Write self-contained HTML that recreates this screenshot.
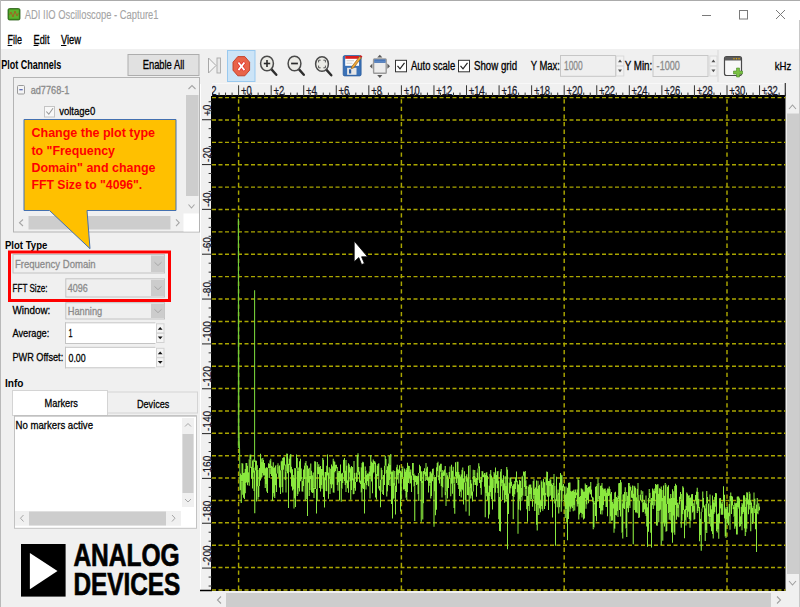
<!DOCTYPE html>
<html><head><meta charset="utf-8"><style>
html,body{margin:0;padding:0;width:800px;height:607px;overflow:hidden;background:#f0f0f0}
svg{display:block;font-family:"Liberation Sans",sans-serif}
</style></head><body>
<svg width="800" height="607" viewBox="0 0 800 607">
<rect x="0" y="0" width="800" height="607" fill="#f0f0f0" />
<rect x="0" y="0" width="800" height="49" fill="#ffffff" />
<line x1="0" y1="0.5" x2="800" y2="0.5" stroke="#ababab" stroke-width="1" />
<line x1="0.5" y1="0" x2="0.5" y2="607" stroke="#b9b9b9" stroke-width="1" />
<rect x="8" y="8.5" width="12" height="11.5" rx="1.5" fill="#3f8f1f" stroke="#2a5e14" stroke-width="0.8"/>
<rect x="9.2" y="9.7" width="9.6" height="9" fill="#5cb32e"/>
<polyline points="9.5,15 11,12 13,17 15,11 17,16 18.5,13" fill="none" stroke="#b05020" stroke-width="0.8"/>
<text x="24.8" y="19.1" font-size="12" fill="#a4a4a4" textLength="133.7" lengthAdjust="spacingAndGlyphs" stroke="#a4a4a4" stroke-width="0.1" >ADI IIO Oscilloscope - Capture1</text>
<line x1="702" y1="15.5" x2="711" y2="15.5" stroke="#7a7a7a" stroke-width="1" />
<rect x="739.5" y="10.5" width="8" height="8.5" fill="none" stroke="#7a7a7a" stroke-width="1" />
<line x1="776" y1="10" x2="785" y2="19" stroke="#7a7a7a" stroke-width="1" />
<line x1="785" y1="10" x2="776" y2="19" stroke="#7a7a7a" stroke-width="1" />
<text x="7.6" y="44" font-size="12.2" fill="#000" textLength="14.4" lengthAdjust="spacingAndGlyphs" stroke="#000" stroke-width="0.3" >File</text>
<line x1="7.6" y1="45.5" x2="12.2" y2="45.5" stroke="#000" stroke-width="1" />
<text x="33.6" y="44" font-size="12.2" fill="#000" textLength="15.9" lengthAdjust="spacingAndGlyphs" stroke="#000" stroke-width="0.3" >Edit</text>
<line x1="33.6" y1="45.5" x2="38.4" y2="45.5" stroke="#000" stroke-width="1" />
<text x="61" y="44" font-size="12.2" fill="#000" textLength="20" lengthAdjust="spacingAndGlyphs" stroke="#000" stroke-width="0.3" >View</text>
<line x1="61" y1="45.5" x2="66.4" y2="45.5" stroke="#000" stroke-width="1" />
<text x="1.3" y="69.1" font-size="12" fill="#000" font-weight="700" textLength="59.9" lengthAdjust="spacingAndGlyphs" >Plot Channels</text>
<rect x="128" y="54.5" width="71" height="21" fill="#e1e1e1" stroke="#adadad" stroke-width="1" />
<text x="142.7" y="68.8" font-size="12.2" fill="#000" textLength="41.6" lengthAdjust="spacingAndGlyphs" stroke="#000" stroke-width="0.3" >Enable All</text>
<rect x="212" y="84" width="574" height="12" fill="#f0f0f0" />
<line x1="212" y1="83.5" x2="786" y2="83.5" stroke="#f8f8f8" stroke-width="1" />
<rect x="200" y="84" width="12" height="507" fill="#f0f0f0" />
<line x1="200.5" y1="84" x2="200.5" y2="591" stroke="#ffffff" stroke-width="1" />
<rect x="212" y="96" width="573.5" height="495" fill="#000000" />
<line x1="212" y1="97.6" x2="785.5" y2="97.6" stroke="#aaa600" stroke-width="1.45" stroke-dasharray="4 2.5"/>
<line x1="212" y1="119.97999999999999" x2="785.5" y2="119.97999999999999" stroke="#aaa600" stroke-width="1.45" stroke-dasharray="4 2.5"/>
<line x1="212" y1="142.35999999999999" x2="785.5" y2="142.35999999999999" stroke="#aaa600" stroke-width="1.45" stroke-dasharray="4 2.5"/>
<line x1="212" y1="164.74" x2="785.5" y2="164.74" stroke="#aaa600" stroke-width="1.45" stroke-dasharray="4 2.5"/>
<line x1="212" y1="187.12" x2="785.5" y2="187.12" stroke="#aaa600" stroke-width="1.45" stroke-dasharray="4 2.5"/>
<line x1="212" y1="209.5" x2="785.5" y2="209.5" stroke="#aaa600" stroke-width="1.45" stroke-dasharray="4 2.5"/>
<line x1="212" y1="231.88" x2="785.5" y2="231.88" stroke="#aaa600" stroke-width="1.45" stroke-dasharray="4 2.5"/>
<line x1="212" y1="254.26" x2="785.5" y2="254.26" stroke="#aaa600" stroke-width="1.45" stroke-dasharray="4 2.5"/>
<line x1="212" y1="276.64" x2="785.5" y2="276.64" stroke="#aaa600" stroke-width="1.45" stroke-dasharray="4 2.5"/>
<line x1="212" y1="299.02" x2="785.5" y2="299.02" stroke="#aaa600" stroke-width="1.45" stroke-dasharray="4 2.5"/>
<line x1="212" y1="321.4" x2="785.5" y2="321.4" stroke="#aaa600" stroke-width="1.45" stroke-dasharray="4 2.5"/>
<line x1="212" y1="343.78" x2="785.5" y2="343.78" stroke="#aaa600" stroke-width="1.45" stroke-dasharray="4 2.5"/>
<line x1="212" y1="366.15999999999997" x2="785.5" y2="366.15999999999997" stroke="#aaa600" stroke-width="1.45" stroke-dasharray="4 2.5"/>
<line x1="212" y1="388.53999999999996" x2="785.5" y2="388.53999999999996" stroke="#aaa600" stroke-width="1.45" stroke-dasharray="4 2.5"/>
<line x1="212" y1="410.91999999999996" x2="785.5" y2="410.91999999999996" stroke="#aaa600" stroke-width="1.45" stroke-dasharray="4 2.5"/>
<line x1="212" y1="433.29999999999995" x2="785.5" y2="433.29999999999995" stroke="#aaa600" stroke-width="1.45" stroke-dasharray="4 2.5"/>
<line x1="212" y1="455.67999999999995" x2="785.5" y2="455.67999999999995" stroke="#aaa600" stroke-width="1.45" stroke-dasharray="4 2.5"/>
<line x1="212" y1="478.05999999999995" x2="785.5" y2="478.05999999999995" stroke="#aaa600" stroke-width="1.45" stroke-dasharray="4 2.5"/>
<line x1="212" y1="500.43999999999994" x2="785.5" y2="500.43999999999994" stroke="#aaa600" stroke-width="1.45" stroke-dasharray="4 2.5"/>
<line x1="212" y1="522.8199999999999" x2="785.5" y2="522.8199999999999" stroke="#aaa600" stroke-width="1.45" stroke-dasharray="4 2.5"/>
<line x1="212" y1="545.1999999999999" x2="785.5" y2="545.1999999999999" stroke="#aaa600" stroke-width="1.45" stroke-dasharray="4 2.5"/>
<line x1="212" y1="567.5799999999999" x2="785.5" y2="567.5799999999999" stroke="#aaa600" stroke-width="1.45" stroke-dasharray="4 2.5"/>
<line x1="212" y1="589.9599999999999" x2="785.5" y2="589.9599999999999" stroke="#aaa600" stroke-width="1.45" stroke-dasharray="4 2.5"/>
<line x1="238.6" y1="96" x2="238.6" y2="591" stroke="#aaa600" stroke-width="1.45" stroke-dasharray="4.3 3.3" stroke-dashoffset="-3.2"/>
<line x1="401.4" y1="96" x2="401.4" y2="591" stroke="#aaa600" stroke-width="1.45" stroke-dasharray="4.3 3.3" stroke-dashoffset="-3.2"/>
<line x1="564.2" y1="96" x2="564.2" y2="591" stroke="#aaa600" stroke-width="1.45" stroke-dasharray="4.3 3.3" stroke-dashoffset="-3.2"/>
<line x1="727.0" y1="96" x2="727.0" y2="591" stroke="#aaa600" stroke-width="1.45" stroke-dasharray="4.3 3.3" stroke-dashoffset="-3.2"/>
<clipPath id="ctop"><rect x="212" y="80" width="574" height="17"/></clipPath>
<clipPath id="cleft"><rect x="200" y="96" width="12" height="495"/></clipPath>
<g clip-path="url(#ctop)">
<line x1="212" y1="95.5" x2="786" y2="95.5" stroke="#000" stroke-width="1" />
<line x1="206.04" y1="85.3" x2="206.04" y2="96" stroke="#333" stroke-width="1" />
<line x1="212.552" y1="92.6" x2="212.552" y2="96" stroke="#333" stroke-width="1" />
<line x1="219.064" y1="92.6" x2="219.064" y2="96" stroke="#333" stroke-width="1" />
<line x1="225.576" y1="92.6" x2="225.576" y2="96" stroke="#333" stroke-width="1" />
<line x1="232.088" y1="92.6" x2="232.088" y2="96" stroke="#333" stroke-width="1" />
<text transform="translate(208.04,95) scale(0.76,1)" font-size="12.4" fill="#1a1a2a" stroke="#1a1a2a" stroke-width="0.25">-2</text>
<line x1="238.6" y1="85.3" x2="238.6" y2="96" stroke="#333" stroke-width="1" />
<line x1="245.112" y1="92.6" x2="245.112" y2="96" stroke="#333" stroke-width="1" />
<line x1="251.624" y1="92.6" x2="251.624" y2="96" stroke="#333" stroke-width="1" />
<line x1="258.13599999999997" y1="92.6" x2="258.13599999999997" y2="96" stroke="#333" stroke-width="1" />
<line x1="264.648" y1="92.6" x2="264.648" y2="96" stroke="#333" stroke-width="1" />
<text transform="translate(240.90,95) scale(0.76,1)" font-size="12.4" fill="#1a1a2a" stroke="#1a1a2a" stroke-width="0.25">+0</text>
<line x1="271.15999999999997" y1="85.3" x2="271.15999999999997" y2="96" stroke="#333" stroke-width="1" />
<line x1="277.67199999999997" y1="92.6" x2="277.67199999999997" y2="96" stroke="#333" stroke-width="1" />
<line x1="284.18399999999997" y1="92.6" x2="284.18399999999997" y2="96" stroke="#333" stroke-width="1" />
<line x1="290.69599999999997" y1="92.6" x2="290.69599999999997" y2="96" stroke="#333" stroke-width="1" />
<line x1="297.20799999999997" y1="92.6" x2="297.20799999999997" y2="96" stroke="#333" stroke-width="1" />
<text transform="translate(273.46,95) scale(0.76,1)" font-size="12.4" fill="#1a1a2a" stroke="#1a1a2a" stroke-width="0.25">+2</text>
<line x1="303.72" y1="85.3" x2="303.72" y2="96" stroke="#333" stroke-width="1" />
<line x1="310.232" y1="92.6" x2="310.232" y2="96" stroke="#333" stroke-width="1" />
<line x1="316.744" y1="92.6" x2="316.744" y2="96" stroke="#333" stroke-width="1" />
<line x1="323.25600000000003" y1="92.6" x2="323.25600000000003" y2="96" stroke="#333" stroke-width="1" />
<line x1="329.76800000000003" y1="92.6" x2="329.76800000000003" y2="96" stroke="#333" stroke-width="1" />
<text transform="translate(306.02,95) scale(0.76,1)" font-size="12.4" fill="#1a1a2a" stroke="#1a1a2a" stroke-width="0.25">+4</text>
<line x1="336.28" y1="85.3" x2="336.28" y2="96" stroke="#333" stroke-width="1" />
<line x1="342.792" y1="92.6" x2="342.792" y2="96" stroke="#333" stroke-width="1" />
<line x1="349.304" y1="92.6" x2="349.304" y2="96" stroke="#333" stroke-width="1" />
<line x1="355.816" y1="92.6" x2="355.816" y2="96" stroke="#333" stroke-width="1" />
<line x1="362.328" y1="92.6" x2="362.328" y2="96" stroke="#333" stroke-width="1" />
<text transform="translate(338.58,95) scale(0.76,1)" font-size="12.4" fill="#1a1a2a" stroke="#1a1a2a" stroke-width="0.25">+6</text>
<line x1="368.84000000000003" y1="85.3" x2="368.84000000000003" y2="96" stroke="#333" stroke-width="1" />
<line x1="375.35200000000003" y1="92.6" x2="375.35200000000003" y2="96" stroke="#333" stroke-width="1" />
<line x1="381.86400000000003" y1="92.6" x2="381.86400000000003" y2="96" stroke="#333" stroke-width="1" />
<line x1="388.37600000000003" y1="92.6" x2="388.37600000000003" y2="96" stroke="#333" stroke-width="1" />
<line x1="394.88800000000003" y1="92.6" x2="394.88800000000003" y2="96" stroke="#333" stroke-width="1" />
<text transform="translate(371.14,95) scale(0.76,1)" font-size="12.4" fill="#1a1a2a" stroke="#1a1a2a" stroke-width="0.25">+8</text>
<line x1="401.4" y1="85.3" x2="401.4" y2="96" stroke="#333" stroke-width="1" />
<line x1="407.912" y1="92.6" x2="407.912" y2="96" stroke="#333" stroke-width="1" />
<line x1="414.424" y1="92.6" x2="414.424" y2="96" stroke="#333" stroke-width="1" />
<line x1="420.936" y1="92.6" x2="420.936" y2="96" stroke="#333" stroke-width="1" />
<line x1="427.448" y1="92.6" x2="427.448" y2="96" stroke="#333" stroke-width="1" />
<text transform="translate(403.70,95) scale(0.76,1)" font-size="12.4" fill="#1a1a2a" stroke="#1a1a2a" stroke-width="0.25">+10</text>
<line x1="433.96000000000004" y1="85.3" x2="433.96000000000004" y2="96" stroke="#333" stroke-width="1" />
<line x1="440.47200000000004" y1="92.6" x2="440.47200000000004" y2="96" stroke="#333" stroke-width="1" />
<line x1="446.98400000000004" y1="92.6" x2="446.98400000000004" y2="96" stroke="#333" stroke-width="1" />
<line x1="453.49600000000004" y1="92.6" x2="453.49600000000004" y2="96" stroke="#333" stroke-width="1" />
<line x1="460.00800000000004" y1="92.6" x2="460.00800000000004" y2="96" stroke="#333" stroke-width="1" />
<text transform="translate(436.26,95) scale(0.76,1)" font-size="12.4" fill="#1a1a2a" stroke="#1a1a2a" stroke-width="0.25">+12</text>
<line x1="466.52" y1="85.3" x2="466.52" y2="96" stroke="#333" stroke-width="1" />
<line x1="473.032" y1="92.6" x2="473.032" y2="96" stroke="#333" stroke-width="1" />
<line x1="479.544" y1="92.6" x2="479.544" y2="96" stroke="#333" stroke-width="1" />
<line x1="486.056" y1="92.6" x2="486.056" y2="96" stroke="#333" stroke-width="1" />
<line x1="492.568" y1="92.6" x2="492.568" y2="96" stroke="#333" stroke-width="1" />
<text transform="translate(468.82,95) scale(0.76,1)" font-size="12.4" fill="#1a1a2a" stroke="#1a1a2a" stroke-width="0.25">+14</text>
<line x1="499.08000000000004" y1="85.3" x2="499.08000000000004" y2="96" stroke="#333" stroke-width="1" />
<line x1="505.59200000000004" y1="92.6" x2="505.59200000000004" y2="96" stroke="#333" stroke-width="1" />
<line x1="512.104" y1="92.6" x2="512.104" y2="96" stroke="#333" stroke-width="1" />
<line x1="518.616" y1="92.6" x2="518.616" y2="96" stroke="#333" stroke-width="1" />
<line x1="525.128" y1="92.6" x2="525.128" y2="96" stroke="#333" stroke-width="1" />
<text transform="translate(501.38,95) scale(0.76,1)" font-size="12.4" fill="#1a1a2a" stroke="#1a1a2a" stroke-width="0.25">+16</text>
<line x1="531.64" y1="85.3" x2="531.64" y2="96" stroke="#333" stroke-width="1" />
<line x1="538.152" y1="92.6" x2="538.152" y2="96" stroke="#333" stroke-width="1" />
<line x1="544.664" y1="92.6" x2="544.664" y2="96" stroke="#333" stroke-width="1" />
<line x1="551.1759999999999" y1="92.6" x2="551.1759999999999" y2="96" stroke="#333" stroke-width="1" />
<line x1="557.688" y1="92.6" x2="557.688" y2="96" stroke="#333" stroke-width="1" />
<text transform="translate(533.94,95) scale(0.76,1)" font-size="12.4" fill="#1a1a2a" stroke="#1a1a2a" stroke-width="0.25">+18</text>
<line x1="564.2" y1="85.3" x2="564.2" y2="96" stroke="#333" stroke-width="1" />
<line x1="570.712" y1="92.6" x2="570.712" y2="96" stroke="#333" stroke-width="1" />
<line x1="577.224" y1="92.6" x2="577.224" y2="96" stroke="#333" stroke-width="1" />
<line x1="583.7360000000001" y1="92.6" x2="583.7360000000001" y2="96" stroke="#333" stroke-width="1" />
<line x1="590.248" y1="92.6" x2="590.248" y2="96" stroke="#333" stroke-width="1" />
<text transform="translate(566.50,95) scale(0.76,1)" font-size="12.4" fill="#1a1a2a" stroke="#1a1a2a" stroke-width="0.25">+20</text>
<line x1="596.76" y1="85.3" x2="596.76" y2="96" stroke="#333" stroke-width="1" />
<line x1="603.2719999999999" y1="92.6" x2="603.2719999999999" y2="96" stroke="#333" stroke-width="1" />
<line x1="609.784" y1="92.6" x2="609.784" y2="96" stroke="#333" stroke-width="1" />
<line x1="616.296" y1="92.6" x2="616.296" y2="96" stroke="#333" stroke-width="1" />
<line x1="622.808" y1="92.6" x2="622.808" y2="96" stroke="#333" stroke-width="1" />
<text transform="translate(599.06,95) scale(0.76,1)" font-size="12.4" fill="#1a1a2a" stroke="#1a1a2a" stroke-width="0.25">+22</text>
<line x1="629.32" y1="85.3" x2="629.32" y2="96" stroke="#333" stroke-width="1" />
<line x1="635.8320000000001" y1="92.6" x2="635.8320000000001" y2="96" stroke="#333" stroke-width="1" />
<line x1="642.344" y1="92.6" x2="642.344" y2="96" stroke="#333" stroke-width="1" />
<line x1="648.856" y1="92.6" x2="648.856" y2="96" stroke="#333" stroke-width="1" />
<line x1="655.368" y1="92.6" x2="655.368" y2="96" stroke="#333" stroke-width="1" />
<text transform="translate(631.62,95) scale(0.76,1)" font-size="12.4" fill="#1a1a2a" stroke="#1a1a2a" stroke-width="0.25">+24</text>
<line x1="661.88" y1="85.3" x2="661.88" y2="96" stroke="#333" stroke-width="1" />
<line x1="668.392" y1="92.6" x2="668.392" y2="96" stroke="#333" stroke-width="1" />
<line x1="674.904" y1="92.6" x2="674.904" y2="96" stroke="#333" stroke-width="1" />
<line x1="681.4159999999999" y1="92.6" x2="681.4159999999999" y2="96" stroke="#333" stroke-width="1" />
<line x1="687.928" y1="92.6" x2="687.928" y2="96" stroke="#333" stroke-width="1" />
<text transform="translate(664.18,95) scale(0.76,1)" font-size="12.4" fill="#1a1a2a" stroke="#1a1a2a" stroke-width="0.25">+26</text>
<line x1="694.44" y1="85.3" x2="694.44" y2="96" stroke="#333" stroke-width="1" />
<line x1="700.952" y1="92.6" x2="700.952" y2="96" stroke="#333" stroke-width="1" />
<line x1="707.464" y1="92.6" x2="707.464" y2="96" stroke="#333" stroke-width="1" />
<line x1="713.9760000000001" y1="92.6" x2="713.9760000000001" y2="96" stroke="#333" stroke-width="1" />
<line x1="720.488" y1="92.6" x2="720.488" y2="96" stroke="#333" stroke-width="1" />
<text transform="translate(696.74,95) scale(0.76,1)" font-size="12.4" fill="#1a1a2a" stroke="#1a1a2a" stroke-width="0.25">+28</text>
<line x1="727.0" y1="85.3" x2="727.0" y2="96" stroke="#333" stroke-width="1" />
<line x1="733.512" y1="92.6" x2="733.512" y2="96" stroke="#333" stroke-width="1" />
<line x1="740.024" y1="92.6" x2="740.024" y2="96" stroke="#333" stroke-width="1" />
<line x1="746.5360000000001" y1="92.6" x2="746.5360000000001" y2="96" stroke="#333" stroke-width="1" />
<line x1="753.048" y1="92.6" x2="753.048" y2="96" stroke="#333" stroke-width="1" />
<text transform="translate(729.30,95) scale(0.76,1)" font-size="12.4" fill="#1a1a2a" stroke="#1a1a2a" stroke-width="0.25">+30</text>
<line x1="759.5600000000001" y1="85.3" x2="759.5600000000001" y2="96" stroke="#333" stroke-width="1" />
<line x1="766.0720000000001" y1="92.6" x2="766.0720000000001" y2="96" stroke="#333" stroke-width="1" />
<line x1="772.5840000000001" y1="92.6" x2="772.5840000000001" y2="96" stroke="#333" stroke-width="1" />
<line x1="779.096" y1="92.6" x2="779.096" y2="96" stroke="#333" stroke-width="1" />
<line x1="785.6080000000001" y1="92.6" x2="785.6080000000001" y2="96" stroke="#333" stroke-width="1" />
<text transform="translate(761.86,95) scale(0.76,1)" font-size="12.4" fill="#1a1a2a" stroke="#1a1a2a" stroke-width="0.25">+32</text>
<line x1="785.3" y1="83" x2="785.3" y2="96" stroke="#333" stroke-width="1.2" />
</g>
<g clip-path="url(#cleft)">
<line x1="211.5" y1="96" x2="211.5" y2="591" stroke="#000" stroke-width="1" />
<line x1="202" y1="74.86" x2="212" y2="74.86" stroke="#333" stroke-width="1.1" />
<line x1="208.6" y1="83.828" x2="212" y2="83.828" stroke="#333" stroke-width="1" />
<line x1="208.6" y1="92.79599999999999" x2="212" y2="92.79599999999999" stroke="#333" stroke-width="1" />
<line x1="208.6" y1="101.76400000000001" x2="212" y2="101.76400000000001" stroke="#333" stroke-width="1" />
<line x1="208.6" y1="110.732" x2="212" y2="110.732" stroke="#333" stroke-width="1" />
<line x1="202" y1="119.7" x2="212" y2="119.7" stroke="#333" stroke-width="1.1" />
<line x1="208.6" y1="128.668" x2="212" y2="128.668" stroke="#333" stroke-width="1" />
<line x1="208.6" y1="137.636" x2="212" y2="137.636" stroke="#333" stroke-width="1" />
<line x1="208.6" y1="146.604" x2="212" y2="146.604" stroke="#333" stroke-width="1" />
<line x1="208.6" y1="155.572" x2="212" y2="155.572" stroke="#333" stroke-width="1" />
<text transform="translate(211.2,116.10) rotate(-90) scale(0.88,1)" font-size="11.4" fill="#1a1a2a" stroke="#1a1a2a" stroke-width="0.2">+0</text>
<line x1="202" y1="164.54000000000002" x2="212" y2="164.54000000000002" stroke="#333" stroke-width="1.1" />
<line x1="208.6" y1="173.508" x2="212" y2="173.508" stroke="#333" stroke-width="1" />
<line x1="208.6" y1="182.47600000000003" x2="212" y2="182.47600000000003" stroke="#333" stroke-width="1" />
<line x1="208.6" y1="191.44400000000002" x2="212" y2="191.44400000000002" stroke="#333" stroke-width="1" />
<line x1="208.6" y1="200.41200000000003" x2="212" y2="200.41200000000003" stroke="#333" stroke-width="1" />
<text transform="translate(211.2,161.94) rotate(-90) scale(0.88,1)" font-size="11.4" fill="#1a1a2a" stroke="#1a1a2a" stroke-width="0.2">-20</text>
<line x1="202" y1="209.38" x2="212" y2="209.38" stroke="#333" stroke-width="1.1" />
<line x1="208.6" y1="218.34799999999998" x2="212" y2="218.34799999999998" stroke="#333" stroke-width="1" />
<line x1="208.6" y1="227.316" x2="212" y2="227.316" stroke="#333" stroke-width="1" />
<line x1="208.6" y1="236.284" x2="212" y2="236.284" stroke="#333" stroke-width="1" />
<line x1="208.6" y1="245.252" x2="212" y2="245.252" stroke="#333" stroke-width="1" />
<text transform="translate(211.2,206.78) rotate(-90) scale(0.88,1)" font-size="11.4" fill="#1a1a2a" stroke="#1a1a2a" stroke-width="0.2">-40</text>
<line x1="202" y1="254.22000000000003" x2="212" y2="254.22000000000003" stroke="#333" stroke-width="1.1" />
<line x1="208.6" y1="263.18800000000005" x2="212" y2="263.18800000000005" stroke="#333" stroke-width="1" />
<line x1="208.6" y1="272.156" x2="212" y2="272.156" stroke="#333" stroke-width="1" />
<line x1="208.6" y1="281.124" x2="212" y2="281.124" stroke="#333" stroke-width="1" />
<line x1="208.6" y1="290.09200000000004" x2="212" y2="290.09200000000004" stroke="#333" stroke-width="1" />
<text transform="translate(211.2,251.62) rotate(-90) scale(0.88,1)" font-size="11.4" fill="#1a1a2a" stroke="#1a1a2a" stroke-width="0.2">-60</text>
<line x1="202" y1="299.06" x2="212" y2="299.06" stroke="#333" stroke-width="1.1" />
<line x1="208.6" y1="308.028" x2="212" y2="308.028" stroke="#333" stroke-width="1" />
<line x1="208.6" y1="316.996" x2="212" y2="316.996" stroke="#333" stroke-width="1" />
<line x1="208.6" y1="325.964" x2="212" y2="325.964" stroke="#333" stroke-width="1" />
<line x1="208.6" y1="334.932" x2="212" y2="334.932" stroke="#333" stroke-width="1" />
<text transform="translate(211.2,296.46) rotate(-90) scale(0.88,1)" font-size="11.4" fill="#1a1a2a" stroke="#1a1a2a" stroke-width="0.2">-80</text>
<line x1="202" y1="343.90000000000003" x2="212" y2="343.90000000000003" stroke="#333" stroke-width="1.1" />
<line x1="208.6" y1="352.86800000000005" x2="212" y2="352.86800000000005" stroke="#333" stroke-width="1" />
<line x1="208.6" y1="361.836" x2="212" y2="361.836" stroke="#333" stroke-width="1" />
<line x1="208.6" y1="370.80400000000003" x2="212" y2="370.80400000000003" stroke="#333" stroke-width="1" />
<line x1="208.6" y1="379.77200000000005" x2="212" y2="379.77200000000005" stroke="#333" stroke-width="1" />
<text transform="translate(211.2,341.30) rotate(-90) scale(0.88,1)" font-size="11.4" fill="#1a1a2a" stroke="#1a1a2a" stroke-width="0.2">-100</text>
<line x1="202" y1="388.74" x2="212" y2="388.74" stroke="#333" stroke-width="1.1" />
<line x1="208.6" y1="397.708" x2="212" y2="397.708" stroke="#333" stroke-width="1" />
<line x1="208.6" y1="406.676" x2="212" y2="406.676" stroke="#333" stroke-width="1" />
<line x1="208.6" y1="415.644" x2="212" y2="415.644" stroke="#333" stroke-width="1" />
<line x1="208.6" y1="424.612" x2="212" y2="424.612" stroke="#333" stroke-width="1" />
<text transform="translate(211.2,386.14) rotate(-90) scale(0.88,1)" font-size="11.4" fill="#1a1a2a" stroke="#1a1a2a" stroke-width="0.2">-120</text>
<line x1="202" y1="433.58" x2="212" y2="433.58" stroke="#333" stroke-width="1.1" />
<line x1="208.6" y1="442.548" x2="212" y2="442.548" stroke="#333" stroke-width="1" />
<line x1="208.6" y1="451.51599999999996" x2="212" y2="451.51599999999996" stroke="#333" stroke-width="1" />
<line x1="208.6" y1="460.484" x2="212" y2="460.484" stroke="#333" stroke-width="1" />
<line x1="208.6" y1="469.452" x2="212" y2="469.452" stroke="#333" stroke-width="1" />
<text transform="translate(211.2,430.98) rotate(-90) scale(0.88,1)" font-size="11.4" fill="#1a1a2a" stroke="#1a1a2a" stroke-width="0.2">-140</text>
<line x1="202" y1="478.42" x2="212" y2="478.42" stroke="#333" stroke-width="1.1" />
<line x1="208.6" y1="487.38800000000003" x2="212" y2="487.38800000000003" stroke="#333" stroke-width="1" />
<line x1="208.6" y1="496.356" x2="212" y2="496.356" stroke="#333" stroke-width="1" />
<line x1="208.6" y1="505.324" x2="212" y2="505.324" stroke="#333" stroke-width="1" />
<line x1="208.6" y1="514.292" x2="212" y2="514.292" stroke="#333" stroke-width="1" />
<text transform="translate(211.2,475.82) rotate(-90) scale(0.88,1)" font-size="11.4" fill="#1a1a2a" stroke="#1a1a2a" stroke-width="0.2">-160</text>
<line x1="202" y1="523.2600000000001" x2="212" y2="523.2600000000001" stroke="#333" stroke-width="1.1" />
<line x1="208.6" y1="532.2280000000001" x2="212" y2="532.2280000000001" stroke="#333" stroke-width="1" />
<line x1="208.6" y1="541.1960000000001" x2="212" y2="541.1960000000001" stroke="#333" stroke-width="1" />
<line x1="208.6" y1="550.1640000000001" x2="212" y2="550.1640000000001" stroke="#333" stroke-width="1" />
<line x1="208.6" y1="559.1320000000001" x2="212" y2="559.1320000000001" stroke="#333" stroke-width="1" />
<text transform="translate(211.2,520.66) rotate(-90) scale(0.88,1)" font-size="11.4" fill="#1a1a2a" stroke="#1a1a2a" stroke-width="0.2">-180</text>
<line x1="202" y1="568.1" x2="212" y2="568.1" stroke="#333" stroke-width="1.1" />
<line x1="208.6" y1="577.068" x2="212" y2="577.068" stroke="#333" stroke-width="1" />
<line x1="208.6" y1="586.0360000000001" x2="212" y2="586.0360000000001" stroke="#333" stroke-width="1" />
<line x1="208.6" y1="595.004" x2="212" y2="595.004" stroke="#333" stroke-width="1" />
<line x1="208.6" y1="603.972" x2="212" y2="603.972" stroke="#333" stroke-width="1" />
<text transform="translate(211.2,565.50) rotate(-90) scale(0.88,1)" font-size="11.4" fill="#1a1a2a" stroke="#1a1a2a" stroke-width="0.2">-200</text>
</g>
<line x1="200" y1="590.5" x2="212" y2="590.5" stroke="#000" stroke-width="1.5" />
<polyline points="238.40,448.0 238.40,218.7 238.90,430.0 239.60,450.0 240.00,490.2" fill="none" stroke="#74d03a" stroke-width="1"/>
<line x1="254.6" y1="462" x2="254.6" y2="290.3" stroke="#7ad83c" stroke-width="1.05" />
<path d="M240 490.2h1V503.1h-1zM243 463.6h1V473.0h-1zM244 468.9h1V472.4h-1zM247 463.1h1V465.7h-1zM248 459.3h1V472.3h-1zM248 482.6h1V485.8h-1zM251 454.5h1V466.8h-1zM252 459.5h1V460.6h-1zM255 470.4h1V513.3h-1zM259 486.1h1V497.0h-1zM263 458.0h1V460.1h-1zM264 475.6h1V488.1h-1zM267 467.1h1V467.9h-1zM268 467.9h1V478.1h-1zM271 458.8h1V465.7h-1zM272 462.3h1V466.6h-1zM275 485.2h1V498.0h-1zM276 465.3h1V473.4h-1zM280 461.3h1V470.2h-1zM283 469.8h1V492.4h-1zM284 465.5h1V480.3h-1zM287 453.5h1V453.7h-1zM288 458.4h1V463.8h-1zM291 454.0h1V466.7h-1zM295 468.1h1V468.3h-1zM296 468.3h1V495.9h-1zM303 486.0h1V491.8h-1zM304 462.8h1V465.5h-1zM304 479.1h1V500.6h-1zM307 465.0h1V466.0h-1zM308 467.7h1V468.7h-1zM308 482.8h1V496.1h-1zM311 463.5h1V470.8h-1zM312 472.4h1V475.2h-1zM315 461.3h1V461.6h-1zM316 462.0h1V489.1h-1zM319 464.2h1V466.8h-1zM323 458.0h1V459.7h-1zM324 472.0h1V477.8h-1zM327 475.5h1V491.3h-1zM328 467.2h1V472.4h-1zM332 458.7h1V466.3h-1zM332 484.4h1V492.4h-1zM335 461.7h1V464.7h-1zM335 471.1h1V472.6h-1zM336 468.5h1V485.1h-1zM340 480.9h1V501.7h-1zM343 472.7h1V483.0h-1zM344 480.9h1V485.0h-1zM347 465.4h1V480.3h-1zM351 490.0h1V499.8h-1zM352 480.4h1V494.2h-1zM355 472.8h1V482.1h-1zM356 455.1h1V472.5h-1zM359 467.1h1V471.4h-1zM360 467.2h1V480.5h-1zM360 484.0h1V492.6h-1zM363 461.8h1V462.2h-1zM364 466.4h1V482.9h-1zM367 481.2h1V485.3h-1zM368 471.5h1V473.4h-1zM371 455.0h1V461.5h-1zM372 459.5h1V462.8h-1zM375 461.2h1V462.5h-1zM376 465.4h1V474.1h-1zM379 463.2h1V485.9h-1zM380 467.7h1V479.7h-1zM384 455.7h1V465.7h-1zM387 491.6h1V496.6h-1zM388 456.0h1V463.5h-1zM391 453.9h1V471.4h-1zM392 470.3h1V471.4h-1zM395 470.9h1V485.7h-1zM396 464.8h1V467.2h-1zM399 473.3h1V483.4h-1zM403 466.5h1V478.8h-1zM404 489.2h1V491.0h-1zM407 492.0h1V500.2h-1zM411 469.5h1V475.6h-1zM412 475.6h1V480.1h-1zM415 475.2h1V475.6h-1zM415 482.1h1V520.9h-1zM419 472.9h1V500.9h-1zM420 480.9h1V521.7h-1zM423 503.3h1V519.6h-1zM424 474.5h1V481.1h-1zM428 476.3h1V477.4h-1zM431 471.6h1V473.3h-1zM431 496.1h1V498.5h-1zM432 468.6h1V469.1h-1zM436 462.9h1V467.2h-1zM440 463.7h1V463.8h-1zM440 471.7h1V486.2h-1zM443 469.9h1V471.3h-1zM443 475.9h1V487.4h-1zM444 466.0h1V469.6h-1zM444 475.8h1V495.2h-1zM447 472.7h1V475.2h-1zM448 471.9h1V478.4h-1zM451 483.8h1V496.3h-1zM452 466.8h1V470.7h-1zM455 476.5h1V513.7h-1zM456 461.8h1V471.8h-1zM459 472.0h1V474.5h-1zM460 474.3h1V476.5h-1zM460 491.8h1V497.6h-1zM463 467.4h1V478.2h-1zM464 482.5h1V500.0h-1zM467 474.2h1V478.2h-1zM468 495.6h1V515.8h-1zM471 480.0h1V483.6h-1zM471 495.7h1V498.5h-1zM472 469.7h1V491.6h-1zM475 470.0h1V478.4h-1zM476 472.5h1V477.9h-1zM479 463.3h1V466.2h-1zM480 476.7h1V479.6h-1zM480 488.0h1V494.8h-1zM483 471.3h1V474.5h-1zM484 486.8h1V517.2h-1zM487 472.1h1V475.7h-1zM488 485.5h1V492.2h-1zM491 469.9h1V475.4h-1zM495 492.8h1V501.6h-1zM496 471.2h1V475.0h-1zM496 483.7h1V488.3h-1zM499 480.6h1V497.0h-1zM500 469.1h1V471.6h-1zM503 490.5h1V500.1h-1zM504 476.3h1V483.3h-1zM507 467.1h1V469.4h-1zM508 482.6h1V493.4h-1zM511 477.3h1V481.7h-1zM511 486.0h1V488.5h-1zM512 484.2h1V485.9h-1zM512 495.9h1V519.3h-1zM515 489.0h1V494.5h-1zM516 482.2h1V492.6h-1zM519 499.7h1V509.8h-1zM523 475.7h1V495.8h-1zM524 470.9h1V472.0h-1zM524 487.0h1V496.0h-1zM527 485.9h1V496.1h-1zM528 484.7h1V486.6h-1zM528 506.1h1V511.1h-1zM531 484.6h1V487.5h-1zM531 499.1h1V501.1h-1zM532 480.9h1V498.8h-1zM535 503.8h1V511.0h-1zM536 524.8h1V530.6h-1zM539 508.4h1V515.0h-1zM540 480.4h1V500.4h-1zM543 495.5h1V510.8h-1zM547 471.5h1V471.9h-1zM548 480.9h1V481.0h-1zM551 479.4h1V483.6h-1zM552 483.0h1V484.9h-1zM555 485.8h1V499.3h-1zM556 501.0h1V507.3h-1zM559 507.3h1V513.4h-1zM560 490.4h1V511.8h-1zM563 487.6h1V491.3h-1zM564 502.0h1V518.0h-1zM568 482.4h1V483.0h-1zM571 490.7h1V491.4h-1zM571 506.8h1V508.8h-1zM572 490.3h1V490.9h-1zM572 508.0h1V511.3h-1zM575 498.0h1V510.4h-1zM576 489.3h1V492.4h-1zM576 495.3h1V506.6h-1zM579 479.9h1V497.0h-1zM579 514.6h1V519.5h-1zM580 488.3h1V495.9h-1zM580 512.8h1V513.0h-1zM583 489.5h1V491.4h-1zM584 483.5h1V491.4h-1zM587 484.9h1V487.9h-1zM587 500.3h1V504.5h-1zM588 486.4h1V487.1h-1zM591 482.1h1V489.6h-1zM592 501.8h1V529.2h-1zM596 483.7h1V486.0h-1zM599 482.9h1V496.1h-1zM600 485.2h1V485.9h-1zM603 487.7h1V489.3h-1zM603 505.1h1V510.4h-1zM604 488.4h1V488.7h-1zM604 496.2h1V500.8h-1zM608 486.6h1V488.6h-1zM615 515.0h1V528.8h-1zM623 508.2h1V538.5h-1zM624 487.3h1V492.0h-1zM627 491.9h1V495.8h-1zM627 508.2h1V537.1h-1zM631 487.1h1V490.5h-1zM632 498.2h1V544.3h-1zM635 486.2h1V487.8h-1zM636 488.8h1V497.2h-1zM636 512.6h1V513.2h-1zM639 495.0h1V500.4h-1zM639 517.6h1V517.9h-1zM640 490.3h1V494.6h-1zM643 491.2h1V502.2h-1zM643 512.0h1V512.3h-1zM644 509.6h1V513.8h-1zM647 503.5h1V507.3h-1zM648 489.0h1V498.0h-1zM652 505.2h1V508.9h-1zM655 493.4h1V505.4h-1zM656 484.2h1V484.9h-1zM656 525.5h1V525.8h-1zM659 510.7h1V522.3h-1zM660 486.5h1V488.7h-1zM660 509.7h1V545.0h-1zM663 522.6h1V540.8h-1zM664 482.9h1V495.8h-1zM667 503.9h1V530.9h-1zM668 513.1h1V519.8h-1zM671 494.1h1V497.9h-1zM675 505.1h1V534.8h-1zM679 504.5h1V517.2h-1zM680 499.6h1V527.7h-1zM683 486.2h1V487.6h-1zM683 510.1h1V514.3h-1zM684 509.1h1V510.1h-1zM687 492.5h1V493.7h-1zM688 495.3h1V495.6h-1zM688 511.8h1V519.1h-1zM691 505.9h1V520.8h-1zM695 500.3h1V519.3h-1zM696 487.7h1V491.5h-1zM696 504.4h1V513.0h-1zM699 498.8h1V507.0h-1zM700 511.7h1V518.7h-1zM700 535.1h1V550.7h-1zM703 491.4h1V497.9h-1zM703 507.2h1V508.6h-1zM704 522.3h1V541.0h-1zM707 491.1h1V496.9h-1zM707 503.5h1V533.0h-1zM708 516.3h1V523.8h-1zM711 505.3h1V509.2h-1zM712 533.9h1V538.4h-1zM715 506.8h1V512.4h-1zM716 531.0h1V532.6h-1zM719 523.3h1V538.8h-1zM720 508.6h1V514.7h-1zM723 501.6h1V514.8h-1zM724 518.5h1V536.6h-1zM728 504.0h1V512.4h-1zM731 492.4h1V495.9h-1zM732 505.6h1V509.2h-1zM735 502.4h1V503.2h-1zM735 526.4h1V528.8h-1zM736 496.8h1V502.9h-1zM739 496.8h1V498.2h-1zM740 506.8h1V516.3h-1zM743 512.2h1V514.1h-1zM744 528.4h1V535.9h-1zM747 492.3h1V492.4h-1zM747 504.4h1V528.7h-1zM748 491.8h1V499.6h-1zM751 499.8h1V502.4h-1zM751 513.4h1V531.3h-1zM752 505.8h1V507.8h-1zM755 498.4h1V508.8h-1zM756 498.1h1V504.6h-1zM759 503.3h1V506.6h-1zM759 510.0h1V511.2h-1z" fill="#8ae83e" fill-opacity="0.3"/>
<path d="M241 463.1h1V475.0h-1zM242 463.1h1V463.6h-1zM245 462.9h1V468.9h-1zM246 462.9h1V463.1h-1zM246 482.0h1V483.2h-1zM249 454.8h1V459.3h-1zM253 472.8h1V491.0h-1zM254 467.6h1V470.4h-1zM257 486.5h1V499.4h-1zM258 469.7h1V486.1h-1zM258 497.0h1V499.4h-1zM262 473.2h1V477.2h-1zM265 467.7h1V468.3h-1zM269 460.2h1V463.8h-1zM273 493.3h1V496.8h-1zM277 463.2h1V465.3h-1zM278 463.2h1V465.7h-1zM281 460.5h1V461.3h-1zM281 470.2h1V487.3h-1zM285 480.3h1V492.6h-1zM286 471.3h1V492.6h-1zM289 455.1h1V458.4h-1zM289 465.0h1V471.9h-1zM293 489.4h1V508.4h-1zM294 498.4h1V508.4h-1zM298 488.2h1V494.3h-1zM301 479.2h1V491.4h-1zM302 477.1h1V480.9h-1zM305 460.9h1V462.8h-1zM306 460.9h1V465.0h-1zM310 479.3h1V490.2h-1zM313 492.8h1V497.9h-1zM314 488.9h1V497.9h-1zM321 485.1h1V488.7h-1zM322 475.7h1V488.7h-1zM325 480.6h1V491.0h-1zM329 478.7h1V493.9h-1zM330 484.5h1V493.9h-1zM333 492.4h1V492.7h-1zM334 460.8h1V461.7h-1zM334 472.6h1V492.7h-1zM337 485.1h1V490.8h-1zM338 482.6h1V490.8h-1zM341 472.9h1V474.0h-1zM342 483.0h1V488.8h-1zM345 460.0h1V470.6h-1zM345 485.0h1V491.9h-1zM346 460.0h1V465.4h-1zM346 483.3h1V491.9h-1zM349 472.7h1V481.7h-1zM350 467.1h1V468.3h-1zM353 460.9h1V478.3h-1zM354 460.9h1V472.8h-1zM354 488.2h1V494.1h-1zM357 453.2h1V455.1h-1zM358 453.2h1V467.1h-1zM361 463.0h1V467.2h-1zM361 492.6h1V500.8h-1zM362 488.5h1V500.8h-1zM365 482.9h1V489.5h-1zM366 470.6h1V475.1h-1zM366 485.3h1V489.5h-1zM369 466.0h1V471.5h-1zM369 476.7h1V498.5h-1zM370 476.7h1V498.5h-1zM374 461.0h1V461.2h-1zM374 464.2h1V472.2h-1zM377 463.9h1V465.4h-1zM381 479.7h1V491.8h-1zM382 469.9h1V490.2h-1zM385 465.7h1V473.7h-1zM386 459.0h1V469.9h-1zM389 480.1h1V486.0h-1zM390 474.5h1V486.0h-1zM394 485.7h1V498.4h-1zM398 468.7h1V470.0h-1zM401 468.8h1V472.8h-1zM405 469.4h1V471.6h-1zM405 491.0h1V497.7h-1zM409 478.2h1V483.8h-1zM410 483.0h1V483.8h-1zM413 480.1h1V486.6h-1zM414 473.5h1V475.2h-1zM417 475.4h1V476.2h-1zM417 484.4h1V494.2h-1zM422 471.5h1V481.1h-1zM425 463.1h1V472.1h-1zM426 463.1h1V468.2h-1zM429 471.9h1V476.3h-1zM433 475.1h1V526.8h-1zM434 475.0h1V477.3h-1zM434 491.6h1V526.8h-1zM437 461.8h1V462.9h-1zM437 471.3h1V477.2h-1zM438 461.8h1V475.2h-1zM441 486.2h1V497.6h-1zM442 487.4h1V497.6h-1zM445 495.2h1V506.0h-1zM446 491.7h1V506.0h-1zM449 466.5h1V471.9h-1zM450 466.5h1V477.5h-1zM453 483.4h1V508.1h-1zM457 478.8h1V485.0h-1zM458 461.8h1V472.0h-1zM461 469.8h1V474.3h-1zM465 475.9h1V482.5h-1zM465 500.0h1V511.5h-1zM466 481.8h1V511.5h-1zM469 464.9h1V487.3h-1zM470 464.9h1V480.0h-1zM474 482.1h1V484.9h-1zM477 468.6h1V472.5h-1zM478 468.6h1V480.3h-1zM481 471.1h1V476.7h-1zM482 471.1h1V471.3h-1zM482 476.9h1V481.9h-1zM485 472.8h1V475.0h-1zM489 473.9h1V485.5h-1zM490 492.2h1V496.4h-1zM493 472.0h1V478.6h-1zM494 472.0h1V473.2h-1zM497 471.0h1V471.2h-1zM497 488.3h1V493.0h-1zM498 471.0h1V480.6h-1zM502 478.3h1V480.1h-1zM505 495.0h1V501.7h-1zM506 499.3h1V501.7h-1zM509 477.4h1V482.6h-1zM509 493.4h1V493.6h-1zM510 488.5h1V493.6h-1zM513 483.7h1V484.2h-1zM514 494.5h1V497.0h-1zM517 492.6h1V533.8h-1zM518 483.9h1V484.8h-1zM518 509.8h1V533.8h-1zM521 476.5h1V488.0h-1zM521 497.0h1V500.7h-1zM522 495.8h1V500.7h-1zM526 480.2h1V485.9h-1zM529 484.4h1V484.7h-1zM530 484.4h1V484.6h-1zM533 479.0h1V480.9h-1zM534 479.0h1V488.7h-1zM537 480.7h1V488.5h-1zM538 480.7h1V485.8h-1zM541 506.0h1V509.2h-1zM542 481.5h1V487.5h-1zM545 478.3h1V492.7h-1zM546 485.5h1V495.3h-1zM549 478.5h1V480.9h-1zM550 478.5h1V479.4h-1zM553 474.1h1V483.0h-1zM554 474.1h1V485.8h-1zM557 489.6h1V494.5h-1zM558 489.6h1V493.0h-1zM562 475.3h1V485.4h-1zM562 491.3h1V501.7h-1zM565 486.5h1V494.4h-1zM566 486.5h1V493.2h-1zM569 506.8h1V511.7h-1zM570 482.4h1V490.7h-1zM570 508.8h1V511.7h-1zM573 489.5h1V490.3h-1zM574 489.5h1V492.1h-1zM577 478.0h1V489.3h-1zM578 478.0h1V479.9h-1zM581 513.0h1V517.6h-1zM582 488.7h1V489.5h-1zM582 514.2h1V517.6h-1zM585 498.0h1V508.7h-1zM586 504.5h1V508.7h-1zM589 486.0h1V486.4h-1zM589 492.8h1V494.5h-1zM590 494.2h1V494.5h-1zM594 501.1h1V503.1h-1zM594 504.5h1V527.6h-1zM597 478.6h1V483.7h-1zM598 478.6h1V482.9h-1zM601 483.1h1V485.2h-1zM601 510.8h1V514.4h-1zM602 483.1h1V487.7h-1zM602 510.4h1V514.4h-1zM605 500.8h1V506.9h-1zM606 490.3h1V492.4h-1zM609 495.8h1V522.7h-1zM610 488.9h1V493.6h-1zM610 516.6h1V522.7h-1zM613 498.9h1V503.4h-1zM613 508.7h1V532.7h-1zM614 528.8h1V532.7h-1zM617 495.6h1V497.9h-1zM617 511.1h1V517.0h-1zM618 499.2h1V517.0h-1zM621 494.5h1V532.8h-1zM622 494.5h1V503.3h-1zM625 501.4h1V528.5h-1zM629 505.7h1V507.9h-1zM630 485.4h1V487.1h-1zM630 490.7h1V507.9h-1zM633 485.8h1V493.6h-1zM634 485.8h1V486.2h-1zM637 483.0h1V488.8h-1zM638 483.0h1V495.0h-1zM641 494.6h1V502.4h-1zM645 495.5h1V502.9h-1zM645 513.8h1V516.0h-1zM646 495.5h1V503.5h-1zM649 498.0h1V503.1h-1zM650 492.8h1V503.1h-1zM657 484.2h1V484.2h-1zM658 484.2h1V493.7h-1zM662 490.1h1V498.1h-1zM665 523.7h1V531.7h-1zM666 484.6h1V503.9h-1zM666 530.9h1V531.7h-1zM669 498.3h1V498.4h-1zM673 515.8h1V532.8h-1zM677 502.6h1V502.8h-1zM678 502.6h1V504.5h-1zM682 514.3h1V520.8h-1zM685 505.5h1V509.1h-1zM685 520.5h1V525.4h-1zM686 509.9h1V525.4h-1zM689 519.1h1V527.7h-1zM690 520.8h1V527.7h-1zM693 511.8h1V519.8h-1zM694 519.3h1V519.8h-1zM698 491.9h1V498.8h-1zM698 508.2h1V511.3h-1zM701 508.6h1V511.7h-1zM702 508.6h1V511.9h-1zM705 504.1h1V508.2h-1zM709 494.4h1V513.5h-1zM710 494.4h1V505.3h-1zM714 512.4h1V513.9h-1zM717 513.9h1V514.2h-1zM721 514.7h1V514.8h-1zM725 536.6h1V538.0h-1zM726 519.2h1V538.0h-1zM729 496.1h1V504.0h-1zM729 516.5h1V529.8h-1zM730 501.5h1V529.8h-1zM733 509.2h1V516.8h-1zM737 496.0h1V496.8h-1zM738 496.0h1V496.8h-1zM741 502.9h1V506.8h-1zM741 524.1h1V530.3h-1zM742 502.9h1V504.3h-1zM742 514.1h1V530.3h-1zM745 497.6h1V507.0h-1zM746 528.7h1V532.3h-1zM750 493.4h1V499.8h-1zM753 492.5h1V505.8h-1zM754 492.5h1V498.4h-1zM757 513.4h1V514.2h-1zM758 511.2h1V514.2h-1z" fill="#8ae83e" fill-opacity="0.5"/>
<path d="M241 481.3h1V503.1h-1zM242 481.3h1V494.8h-1zM245 483.2h1V493.3h-1zM249 459.3h1V485.8h-1zM250 454.5h1V454.8h-1zM250 459.3h1V467.9h-1zM253 459.5h1V467.6h-1zM254 491.0h1V513.3h-1zM257 465.2h1V469.7h-1zM261 458.6h1V461.2h-1zM261 477.2h1V478.2h-1zM262 458.0h1V461.2h-1zM265 484.8h1V488.1h-1zM266 467.1h1V467.7h-1zM266 484.8h1V491.6h-1zM269 468.5h1V478.1h-1zM270 458.8h1V460.2h-1zM270 468.5h1V474.0h-1zM273 462.3h1V467.8h-1zM274 467.2h1V467.8h-1zM274 496.8h1V498.0h-1zM277 466.5h1V473.4h-1zM278 466.5h1V477.6h-1zM282 458.1h1V460.5h-1zM282 487.3h1V492.4h-1zM285 464.6h1V471.3h-1zM286 453.5h1V471.3h-1zM290 454.0h1V455.1h-1zM290 471.9h1V473.3h-1zM293 475.1h1V478.1h-1zM294 468.1h1V478.1h-1zM297 457.9h1V470.7h-1zM297 494.3h1V495.9h-1zM298 467.6h1V470.7h-1zM301 468.4h1V477.1h-1zM302 491.4h1V491.8h-1zM305 465.0h1V500.6h-1zM306 465.0h1V499.0h-1zM309 467.7h1V475.4h-1zM309 490.2h1V496.1h-1zM310 463.5h1V475.4h-1zM313 472.4h1V487.6h-1zM314 461.3h1V487.6h-1zM317 462.0h1V466.2h-1zM317 474.3h1V500.8h-1zM318 464.2h1V466.2h-1zM318 474.3h1V474.3h-1zM321 469.0h1V469.1h-1zM322 458.0h1V469.1h-1zM325 472.0h1V472.1h-1zM326 465.7h1V472.1h-1zM326 491.0h1V491.3h-1zM329 467.2h1V478.7h-1zM330 468.7h1V478.7h-1zM333 458.7h1V460.8h-1zM337 467.0h1V472.3h-1zM338 471.1h1V472.3h-1zM341 488.8h1V501.7h-1zM342 472.7h1V472.9h-1zM349 464.5h1V467.1h-1zM350 481.7h1V499.8h-1zM353 494.1h1V494.2h-1zM357 472.8h1V481.6h-1zM358 472.8h1V474.7h-1zM362 461.8h1V463.0h-1zM365 466.4h1V470.6h-1zM370 455.0h1V466.0h-1zM373 459.5h1V461.0h-1zM373 472.2h1V473.3h-1zM377 476.2h1V476.4h-1zM378 463.2h1V463.9h-1zM378 476.2h1V488.5h-1zM381 467.7h1V469.9h-1zM382 491.8h1V493.9h-1zM385 455.7h1V459.0h-1zM386 473.7h1V496.6h-1zM389 456.0h1V464.3h-1zM390 453.9h1V464.3h-1zM393 470.3h1V482.9h-1zM393 498.4h1V499.3h-1zM394 470.9h1V482.9h-1zM397 464.8h1V468.7h-1zM397 475.7h1V479.4h-1zM398 475.7h1V483.4h-1zM401 477.2h1V499.5h-1zM402 466.5h1V468.8h-1zM402 477.2h1V478.8h-1zM406 468.2h1V469.4h-1zM406 497.7h1V500.2h-1zM409 465.9h1V472.0h-1zM410 469.5h1V472.0h-1zM413 463.1h1V473.5h-1zM414 486.6h1V520.9h-1zM418 472.9h1V475.4h-1zM418 494.2h1V500.9h-1zM421 470.9h1V471.5h-1zM421 483.8h1V521.7h-1zM422 483.8h1V519.6h-1zM425 476.2h1V481.1h-1zM426 476.2h1V480.0h-1zM429 483.3h1V485.8h-1zM430 471.6h1V471.9h-1zM430 483.3h1V498.5h-1zM433 468.6h1V475.0h-1zM438 477.2h1V480.2h-1zM441 463.7h1V473.0h-1zM442 469.9h1V473.0h-1zM445 466.0h1V491.7h-1zM446 472.7h1V491.7h-1zM449 477.5h1V478.4h-1zM450 477.5h1V496.3h-1zM453 466.8h1V483.4h-1zM454 476.5h1V483.4h-1zM454 508.1h1V513.7h-1zM457 461.8h1V461.8h-1zM458 485.0h1V488.9h-1zM461 489.1h1V497.6h-1zM462 467.4h1V469.8h-1zM462 489.1h1V490.3h-1zM466 474.2h1V475.9h-1zM469 488.1h1V515.8h-1zM470 488.1h1V498.5h-1zM473 469.7h1V475.7h-1zM473 484.9h1V491.6h-1zM474 470.0h1V475.7h-1zM477 480.3h1V485.8h-1zM478 463.3h1V468.6h-1zM481 481.9h1V494.8h-1zM485 493.7h1V517.2h-1zM486 472.1h1V472.8h-1zM486 493.7h1V496.3h-1zM489 496.4h1V514.6h-1zM490 469.9h1V473.9h-1zM493 479.4h1V488.1h-1zM494 479.4h1V501.6h-1zM498 493.0h1V519.3h-1zM501 469.1h1V478.3h-1zM501 482.9h1V486.3h-1zM502 482.9h1V500.1h-1zM505 476.3h1V485.9h-1zM506 467.1h1V485.9h-1zM510 477.3h1V477.4h-1zM513 497.0h1V519.3h-1zM514 481.0h1V483.7h-1zM517 480.8h1V483.9h-1zM522 475.7h1V476.5h-1zM525 470.9h1V480.2h-1zM525 489.4h1V496.0h-1zM526 489.4h1V509.2h-1zM529 494.0h1V511.1h-1zM530 494.0h1V501.1h-1zM533 495.5h1V498.8h-1zM534 495.5h1V511.0h-1zM537 505.7h1V530.6h-1zM538 505.7h1V515.0h-1zM541 480.4h1V481.5h-1zM542 509.2h1V510.8h-1zM545 495.3h1V506.0h-1zM546 471.5h1V478.3h-1zM549 486.0h1V496.6h-1zM550 486.0h1V495.4h-1zM553 485.8h1V497.9h-1zM554 485.8h1V503.5h-1zM557 495.0h1V507.3h-1zM558 495.0h1V513.4h-1zM561 474.8h1V475.3h-1zM561 501.7h1V511.8h-1zM565 509.5h1V518.0h-1zM566 509.5h1V522.1h-1zM569 482.4h1V482.4h-1zM573 504.9h1V511.3h-1zM574 504.9h1V510.4h-1zM577 503.9h1V506.6h-1zM578 503.9h1V519.5h-1zM581 488.3h1V488.7h-1zM585 483.5h1V484.9h-1zM586 484.9h1V484.9h-1zM590 482.1h1V486.0h-1zM593 497.4h1V501.1h-1zM593 527.6h1V529.2h-1zM597 483.7h1V501.6h-1zM598 483.7h1V499.4h-1zM605 488.4h1V490.3h-1zM606 506.9h1V507.0h-1zM609 486.6h1V488.9h-1zM614 492.4h1V498.9h-1zM618 483.2h1V495.6h-1zM621 482.3h1V494.5h-1zM622 532.8h1V538.5h-1zM625 487.3h1V501.4h-1zM626 491.9h1V501.4h-1zM626 528.5h1V537.1h-1zM629 483.1h1V485.4h-1zM633 501.7h1V544.3h-1zM634 501.7h1V509.9h-1zM637 495.0h1V513.2h-1zM638 495.0h1V517.9h-1zM641 490.3h1V494.4h-1zM642 491.2h1V494.4h-1zM642 502.4h1V512.3h-1zM646 516.0h1V526.5h-1zM649 489.0h1V492.8h-1zM650 503.1h1V532.7h-1zM653 489.5h1V490.4h-1zM653 501.4h1V508.9h-1zM654 488.6h1V490.4h-1zM654 501.4h1V505.4h-1zM657 511.5h1V525.8h-1zM658 511.5h1V522.3h-1zM661 486.5h1V490.1h-1zM661 501.7h1V545.0h-1zM662 501.7h1V540.8h-1zM665 482.9h1V484.6h-1zM669 512.4h1V519.8h-1zM670 494.1h1V498.3h-1zM670 512.4h1V520.4h-1zM673 491.2h1V498.1h-1zM674 486.1h1V498.1h-1zM674 532.8h1V534.8h-1zM677 508.8h1V516.5h-1zM678 508.8h1V517.2h-1zM681 494.0h1V500.1h-1zM681 520.8h1V527.7h-1zM682 486.2h1V500.1h-1zM686 492.5h1V505.5h-1zM689 495.3h1V497.5h-1zM690 497.4h1V497.5h-1zM693 503.2h1V505.2h-1zM694 500.3h1V505.2h-1zM697 487.7h1V491.9h-1zM697 511.3h1V513.0h-1zM701 511.9h1V550.7h-1zM702 491.4h1V508.6h-1zM705 529.9h1V541.0h-1zM706 491.1h1V504.1h-1zM706 529.9h1V533.0h-1zM709 517.4h1V523.8h-1zM710 517.4h1V526.5h-1zM713 501.2h1V502.3h-1zM713 513.9h1V538.4h-1zM714 497.1h1V502.3h-1zM717 529.1h1V532.6h-1zM718 513.3h1V513.9h-1zM718 529.1h1V538.8h-1zM721 502.6h1V503.4h-1zM722 501.6h1V503.4h-1zM722 514.8h1V514.8h-1zM725 507.4h1V508.8h-1zM726 506.7h1V508.8h-1zM730 492.4h1V496.1h-1zM733 505.0h1V506.3h-1zM734 502.4h1V506.3h-1zM734 516.8h1V528.8h-1zM737 507.3h1V534.4h-1zM738 507.3h1V508.4h-1zM745 532.3h1V535.9h-1zM746 492.3h1V497.6h-1zM749 491.8h1V493.4h-1zM749 505.5h1V509.5h-1zM750 505.5h1V531.3h-1zM753 505.8h1V522.3h-1zM754 505.8h1V512.9h-1zM757 498.1h1V511.2h-1zM758 503.3h1V511.2h-1z" fill="#8ae83e" fill-opacity="0.8"/>
<path d="M240 473.4h1V475.0h-1zM240 475.0h1V490.2h-1zM241 475.0h1V481.3h-1zM242 463.6h1V481.3h-1zM243 473.0h1V494.8h-1zM243 494.8h1V497.7h-1zM244 472.4h1V493.3h-1zM244 493.3h1V499.0h-1zM245 468.9h1V483.2h-1zM246 463.1h1V482.0h-1zM247 465.7h1V482.0h-1zM247 482.0h1V485.3h-1zM248 472.3h1V482.6h-1zM250 454.8h1V459.3h-1zM251 466.8h1V467.9h-1zM251 467.9h1V478.4h-1zM252 460.6h1V472.8h-1zM252 472.8h1V488.6h-1zM253 467.6h1V472.8h-1zM254 470.4h1V491.0h-1zM255 460.5h1V470.4h-1zM256 460.7h1V465.2h-1zM256 465.2h1V486.5h-1zM256 486.5h1V501.4h-1zM257 469.7h1V486.5h-1zM258 486.1h1V497.0h-1zM259 468.1h1V486.1h-1zM260 453.8h1V458.6h-1zM260 458.6h1V478.2h-1zM260 478.2h1V480.4h-1zM261 461.2h1V477.2h-1zM262 461.2h1V473.2h-1zM263 460.1h1V473.2h-1zM263 473.2h1V475.5h-1zM264 463.0h1V468.3h-1zM264 468.3h1V475.6h-1zM265 468.3h1V484.8h-1zM266 467.7h1V484.8h-1zM267 467.9h1V491.6h-1zM267 491.6h1V492.9h-1zM268 463.3h1V463.8h-1zM268 463.8h1V467.9h-1zM269 463.8h1V468.5h-1zM270 460.2h1V468.5h-1zM271 465.7h1V474.0h-1zM271 474.0h1V475.9h-1zM272 466.6h1V493.3h-1zM272 493.3h1V501.0h-1zM273 467.8h1V493.3h-1zM274 467.8h1V496.8h-1zM275 465.6h1V467.2h-1zM275 467.2h1V485.2h-1zM276 473.4h1V491.9h-1zM277 465.3h1V466.5h-1zM278 465.7h1V466.5h-1zM279 465.4h1V465.7h-1zM279 465.7h1V477.6h-1zM279 477.6h1V487.5h-1zM280 470.2h1V494.1h-1zM281 461.3h1V470.2h-1zM282 460.5h1V487.3h-1zM283 457.3h1V458.1h-1zM283 458.1h1V469.8h-1zM284 457.2h1V464.6h-1zM284 464.6h1V465.5h-1zM285 471.3h1V480.3h-1zM287 453.7h1V471.3h-1zM287 471.3h1V473.3h-1zM288 463.8h1V465.0h-1zM288 465.0h1V508.1h-1zM289 458.4h1V465.0h-1zM290 455.1h1V471.9h-1zM291 466.7h1V473.3h-1zM291 473.3h1V486.5h-1zM292 469.2h1V475.1h-1zM292 475.1h1V489.4h-1zM292 489.4h1V490.5h-1zM293 478.1h1V489.4h-1zM294 478.1h1V498.4h-1zM295 468.3h1V498.4h-1zM295 498.4h1V507.1h-1zM296 454.6h1V457.9h-1zM296 457.9h1V468.3h-1zM297 470.7h1V494.3h-1zM298 470.7h1V488.2h-1zM299 461.3h1V467.6h-1zM299 467.6h1V488.2h-1zM299 488.2h1V491.4h-1zM300 458.8h1V468.4h-1zM300 468.4h1V479.2h-1zM300 479.2h1V481.2h-1zM301 477.1h1V479.2h-1zM302 480.9h1V491.4h-1zM303 469.6h1V480.9h-1zM303 480.9h1V486.0h-1zM304 465.5h1V479.1h-1zM305 462.8h1V465.0h-1zM307 466.0h1V499.0h-1zM307 499.0h1V516.0h-1zM308 468.7h1V482.8h-1zM309 475.4h1V490.2h-1zM310 475.4h1V479.3h-1zM311 470.8h1V479.3h-1zM311 479.3h1V492.2h-1zM312 475.2h1V492.8h-1zM312 492.8h1V493.0h-1zM313 487.6h1V492.8h-1zM314 487.6h1V488.9h-1zM315 461.6h1V488.9h-1zM315 488.9h1V489.1h-1zM316 489.1h1V500.8h-1zM316 500.8h1V513.6h-1zM317 466.2h1V474.3h-1zM318 466.2h1V474.3h-1zM319 466.8h1V474.3h-1zM319 474.3h1V488.1h-1zM320 465.9h1V469.0h-1zM320 469.0h1V485.1h-1zM320 485.1h1V491.6h-1zM321 469.1h1V485.1h-1zM322 469.1h1V475.7h-1zM323 459.7h1V475.7h-1zM323 475.7h1V497.1h-1zM324 477.8h1V480.6h-1zM324 480.6h1V507.4h-1zM325 472.1h1V480.6h-1zM326 472.1h1V491.0h-1zM327 454.5h1V465.7h-1zM327 465.7h1V475.5h-1zM328 472.4h1V478.7h-1zM328 478.7h1V498.8h-1zM330 478.7h1V484.5h-1zM331 464.6h1V468.7h-1zM331 468.7h1V484.5h-1zM331 484.5h1V488.3h-1zM332 466.3h1V484.4h-1zM333 460.8h1V492.4h-1zM334 461.7h1V472.6h-1zM335 464.7h1V471.1h-1zM336 464.7h1V467.0h-1zM336 467.0h1V468.5h-1zM337 472.3h1V485.1h-1zM338 472.3h1V482.6h-1zM339 471.0h1V471.1h-1zM339 471.1h1V482.6h-1zM339 482.6h1V500.3h-1zM340 464.5h1V474.0h-1zM340 474.0h1V480.9h-1zM341 474.0h1V488.8h-1zM342 472.9h1V483.0h-1zM343 459.7h1V472.7h-1zM344 457.9h1V470.6h-1zM344 470.6h1V480.9h-1zM345 470.6h1V485.0h-1zM346 465.4h1V483.3h-1zM347 480.3h1V483.3h-1zM347 483.3h1V488.3h-1zM348 463.2h1V464.5h-1zM348 464.5h1V472.7h-1zM348 472.7h1V492.8h-1zM349 467.1h1V472.7h-1zM350 468.3h1V481.7h-1zM351 466.0h1V468.3h-1zM351 468.3h1V490.0h-1zM352 466.9h1V478.3h-1zM352 478.3h1V480.4h-1zM353 478.3h1V494.1h-1zM354 472.8h1V488.2h-1zM355 482.1h1V488.2h-1zM355 488.2h1V490.8h-1zM356 472.5h1V481.6h-1zM356 481.6h1V482.1h-1zM357 455.1h1V472.8h-1zM358 467.1h1V472.8h-1zM359 471.4h1V474.7h-1zM359 474.7h1V482.6h-1zM360 480.5h1V484.0h-1zM361 467.2h1V492.6h-1zM362 463.0h1V488.5h-1zM363 462.2h1V488.5h-1zM363 488.5h1V488.9h-1zM364 482.9h1V513.4h-1zM365 470.6h1V482.9h-1zM366 475.1h1V485.3h-1zM367 473.6h1V475.1h-1zM367 475.1h1V481.2h-1zM368 473.4h1V476.7h-1zM368 476.7h1V486.2h-1zM369 471.5h1V476.7h-1zM370 466.0h1V476.7h-1zM371 461.5h1V476.7h-1zM371 476.7h1V481.4h-1zM372 462.8h1V473.3h-1zM372 473.3h1V493.2h-1zM373 461.0h1V472.2h-1zM374 461.2h1V464.2h-1zM375 462.5h1V464.2h-1zM375 464.2h1V497.6h-1zM376 474.1h1V476.4h-1zM376 476.4h1V499.4h-1zM377 465.4h1V476.2h-1zM378 463.9h1V476.2h-1zM379 485.9h1V488.5h-1zM379 488.5h1V490.4h-1zM380 479.7h1V507.3h-1zM381 469.9h1V479.7h-1zM382 490.2h1V491.8h-1zM383 475.0h1V490.2h-1zM383 490.2h1V493.9h-1zM383 493.9h1V495.0h-1zM384 465.7h1V485.1h-1zM385 459.0h1V465.7h-1zM386 469.9h1V473.7h-1zM387 466.2h1V469.9h-1zM387 469.9h1V491.6h-1zM388 463.5h1V480.1h-1zM388 480.1h1V485.1h-1zM389 464.3h1V480.1h-1zM390 464.3h1V474.5h-1zM391 471.4h1V474.5h-1zM391 474.5h1V503.9h-1zM392 471.4h1V499.3h-1zM392 499.3h1V518.4h-1zM393 482.9h1V498.4h-1zM394 482.9h1V485.7h-1zM395 485.7h1V514.6h-1zM396 467.2h1V479.4h-1zM396 479.4h1V492.0h-1zM397 468.7h1V475.7h-1zM398 470.0h1V475.7h-1zM399 465.2h1V470.0h-1zM399 470.0h1V473.3h-1zM400 470.7h1V472.8h-1zM400 472.8h1V499.5h-1zM400 499.5h1V511.6h-1zM401 472.8h1V477.2h-1zM402 468.8h1V477.2h-1zM403 478.8h1V489.5h-1zM404 468.6h1V471.6h-1zM404 471.6h1V489.2h-1zM405 471.6h1V491.0h-1zM406 469.4h1V497.7h-1zM407 462.8h1V468.2h-1zM407 468.2h1V492.0h-1zM408 465.8h1V465.9h-1zM408 465.9h1V478.2h-1zM408 478.2h1V482.9h-1zM409 472.0h1V478.2h-1zM410 472.0h1V483.0h-1zM411 475.6h1V483.0h-1zM411 483.0h1V492.1h-1zM412 463.0h1V463.1h-1zM412 463.1h1V475.6h-1zM413 473.5h1V480.1h-1zM414 475.2h1V486.6h-1zM415 475.6h1V482.1h-1zM416 476.1h1V476.2h-1zM416 476.2h1V484.4h-1zM416 484.4h1V484.9h-1zM417 476.2h1V484.4h-1zM418 475.4h1V494.2h-1zM419 464.7h1V472.9h-1zM420 466.3h1V470.9h-1zM420 470.9h1V480.9h-1zM421 471.5h1V483.8h-1zM422 481.1h1V483.8h-1zM423 471.0h1V481.1h-1zM423 481.1h1V503.3h-1zM424 468.3h1V472.1h-1zM424 472.1h1V474.5h-1zM425 472.1h1V476.2h-1zM426 468.2h1V476.2h-1zM427 466.7h1V468.2h-1zM427 468.2h1V480.0h-1zM427 480.0h1V480.7h-1zM428 477.4h1V485.8h-1zM428 485.8h1V492.4h-1zM429 476.3h1V483.3h-1zM430 471.9h1V483.3h-1zM431 473.3h1V496.1h-1zM432 469.1h1V475.1h-1zM432 475.1h1V481.2h-1zM433 475.0h1V475.1h-1zM434 477.3h1V491.6h-1zM435 477.0h1V477.3h-1zM435 477.3h1V491.6h-1zM435 491.6h1V515.2h-1zM436 467.2h1V471.3h-1zM436 471.3h1V509.7h-1zM437 462.9h1V471.3h-1zM438 475.2h1V477.2h-1zM439 465.6h1V475.2h-1zM439 475.2h1V480.2h-1zM439 480.2h1V483.6h-1zM440 463.8h1V471.7h-1zM441 473.0h1V486.2h-1zM442 473.0h1V487.4h-1zM443 471.3h1V475.9h-1zM444 469.6h1V475.8h-1zM445 491.7h1V495.2h-1zM447 475.2h1V491.7h-1zM447 491.7h1V498.6h-1zM448 478.4h1V488.1h-1zM449 471.9h1V477.5h-1zM451 464.8h1V477.5h-1zM451 477.5h1V483.8h-1zM452 470.7h1V483.4h-1zM452 483.4h1V493.8h-1zM454 483.4h1V508.1h-1zM455 462.2h1V476.5h-1zM456 471.8h1V478.8h-1zM456 478.8h1V483.0h-1zM457 461.8h1V478.8h-1zM458 472.0h1V485.0h-1zM459 474.5h1V488.9h-1zM459 488.9h1V495.9h-1zM460 476.5h1V491.8h-1zM461 474.3h1V489.1h-1zM462 469.8h1V489.1h-1zM463 478.2h1V490.3h-1zM463 490.3h1V504.4h-1zM464 471.3h1V482.5h-1zM465 482.5h1V500.0h-1zM466 475.9h1V481.8h-1zM467 478.2h1V481.8h-1zM467 481.8h1V494.9h-1zM468 465.7h1V487.3h-1zM468 487.3h1V495.6h-1zM469 487.3h1V488.1h-1zM470 480.0h1V488.1h-1zM471 483.6h1V495.7h-1zM472 491.6h1V501.6h-1zM473 475.7h1V484.9h-1zM474 475.7h1V482.1h-1zM475 478.4h1V482.1h-1zM475 482.1h1V485.0h-1zM476 477.9h1V485.8h-1zM476 485.8h1V496.8h-1zM477 472.5h1V480.3h-1zM479 466.2h1V468.6h-1zM479 468.6h1V483.1h-1zM480 479.6h1V488.0h-1zM481 476.7h1V481.9h-1zM482 471.3h1V476.9h-1zM483 474.5h1V476.9h-1zM483 476.9h1V477.3h-1zM484 472.9h1V475.0h-1zM484 475.0h1V486.8h-1zM485 475.0h1V493.7h-1zM486 472.8h1V493.7h-1zM487 475.7h1V496.3h-1zM487 496.3h1V500.1h-1zM488 492.2h1V514.6h-1zM488 514.6h1V518.5h-1zM489 485.5h1V496.4h-1zM490 473.9h1V492.2h-1zM491 475.4h1V492.2h-1zM491 492.2h1V499.3h-1zM492 478.2h1V478.6h-1zM492 478.6h1V488.1h-1zM492 488.1h1V509.6h-1zM493 478.6h1V479.4h-1zM494 473.2h1V479.4h-1zM495 467.5h1V473.2h-1zM495 473.2h1V492.8h-1zM496 475.0h1V483.7h-1zM497 471.2h1V488.3h-1zM498 480.6h1V493.0h-1zM499 497.0h1V519.3h-1zM499 519.3h1V530.9h-1zM500 471.6h1V486.3h-1zM500 486.3h1V531.5h-1zM501 478.3h1V482.9h-1zM502 480.1h1V482.9h-1zM503 475.3h1V480.1h-1zM503 480.1h1V490.5h-1zM504 483.3h1V495.0h-1zM504 495.0h1V502.8h-1zM505 485.9h1V495.0h-1zM506 485.9h1V499.3h-1zM507 469.4h1V499.3h-1zM507 499.3h1V549.2h-1zM508 493.4h1V513.9h-1zM509 482.6h1V493.4h-1zM510 477.4h1V488.5h-1zM511 481.7h1V486.0h-1zM512 485.9h1V495.9h-1zM513 484.2h1V497.0h-1zM514 483.7h1V494.5h-1zM515 477.3h1V481.0h-1zM515 481.0h1V489.0h-1zM516 471.6h1V480.8h-1zM516 480.8h1V482.2h-1zM517 483.9h1V492.6h-1zM518 484.8h1V509.8h-1zM519 479.7h1V484.8h-1zM519 484.8h1V499.7h-1zM520 480.7h1V488.0h-1zM520 488.0h1V497.0h-1zM520 497.0h1V510.6h-1zM521 488.0h1V497.0h-1zM522 476.5h1V495.8h-1zM523 471.4h1V475.7h-1zM524 472.0h1V487.0h-1zM525 480.2h1V489.4h-1zM526 485.9h1V489.4h-1zM527 496.1h1V509.2h-1zM527 509.2h1V521.7h-1zM528 486.6h1V506.1h-1zM529 484.7h1V494.0h-1zM530 484.6h1V494.0h-1zM531 487.5h1V499.1h-1zM532 498.8h1V506.8h-1zM533 480.9h1V495.5h-1zM534 488.7h1V495.5h-1zM535 487.4h1V488.7h-1zM535 488.7h1V503.8h-1zM536 480.4h1V488.5h-1zM536 488.5h1V524.8h-1zM537 488.5h1V505.7h-1zM538 485.8h1V505.7h-1zM539 484.8h1V485.8h-1zM539 485.8h1V508.4h-1zM540 500.4h1V506.0h-1zM540 506.0h1V512.2h-1zM541 481.5h1V506.0h-1zM542 487.5h1V509.2h-1zM543 478.9h1V487.5h-1zM543 487.5h1V495.5h-1zM544 482.2h1V492.7h-1zM544 492.7h1V506.0h-1zM544 506.0h1V509.1h-1zM545 492.7h1V495.3h-1zM546 478.3h1V485.5h-1zM547 471.9h1V485.5h-1zM547 485.5h1V496.7h-1zM548 481.0h1V496.6h-1zM548 496.6h1V510.1h-1zM549 480.9h1V486.0h-1zM550 479.4h1V486.0h-1zM551 483.6h1V495.4h-1zM551 495.4h1V499.8h-1zM552 484.9h1V497.9h-1zM552 497.9h1V517.6h-1zM553 483.0h1V485.8h-1zM555 499.3h1V503.5h-1zM555 503.5h1V545.7h-1zM556 476.7h1V494.5h-1zM556 494.5h1V501.0h-1zM557 494.5h1V495.0h-1zM558 493.0h1V495.0h-1zM559 482.7h1V493.0h-1zM559 493.0h1V507.3h-1zM560 473.1h1V474.8h-1zM560 474.8h1V490.4h-1zM561 475.3h1V501.7h-1zM562 485.4h1V491.3h-1zM563 484.0h1V485.4h-1zM563 485.4h1V487.6h-1zM564 486.4h1V494.4h-1zM564 494.4h1V502.0h-1zM565 494.4h1V509.5h-1zM566 493.2h1V509.5h-1zM567 487.8h1V493.2h-1zM567 493.2h1V522.1h-1zM567 522.1h1V540.2h-1zM568 483.0h1V506.8h-1zM568 506.8h1V519.1h-1zM569 482.4h1V506.8h-1zM570 490.7h1V508.8h-1zM571 491.4h1V506.8h-1zM572 490.9h1V508.0h-1zM573 490.3h1V504.9h-1zM574 492.1h1V504.9h-1zM575 489.4h1V492.1h-1zM575 492.1h1V498.0h-1zM576 492.4h1V495.3h-1zM577 489.3h1V503.9h-1zM578 479.9h1V503.9h-1zM579 497.0h1V514.6h-1zM580 495.9h1V512.8h-1zM581 488.7h1V513.0h-1zM582 489.5h1V514.2h-1zM583 491.4h1V514.2h-1zM583 514.2h1V519.5h-1zM584 491.4h1V498.0h-1zM584 498.0h1V518.4h-1zM585 484.9h1V498.0h-1zM586 484.9h1V504.5h-1zM587 487.9h1V500.3h-1zM588 487.1h1V492.8h-1zM588 492.8h1V503.2h-1zM589 486.4h1V492.8h-1zM590 486.0h1V494.2h-1zM591 489.6h1V494.2h-1zM591 494.2h1V497.4h-1zM592 496.8h1V497.4h-1zM592 497.4h1V501.8h-1zM593 501.1h1V527.6h-1zM594 503.1h1V504.5h-1zM595 486.7h1V503.1h-1zM595 503.1h1V504.5h-1zM595 504.5h1V515.9h-1zM596 486.0h1V501.6h-1zM596 501.6h1V521.3h-1zM598 482.9h1V483.7h-1zM599 496.1h1V499.4h-1zM599 499.4h1V507.9h-1zM600 485.9h1V510.8h-1zM600 510.8h1V514.3h-1zM601 485.2h1V510.8h-1zM602 487.7h1V510.4h-1zM603 489.3h1V505.1h-1zM604 488.7h1V496.2h-1zM605 490.3h1V500.8h-1zM606 492.4h1V506.9h-1zM607 488.6h1V492.4h-1zM607 492.4h1V507.0h-1zM607 507.0h1V516.3h-1zM608 488.6h1V495.8h-1zM608 495.8h1V496.0h-1zM609 488.9h1V495.8h-1zM610 493.6h1V516.6h-1zM611 492.1h1V493.6h-1zM611 493.6h1V516.6h-1zM611 516.6h1V520.8h-1zM612 501.7h1V503.4h-1zM612 503.4h1V508.7h-1zM612 508.7h1V520.4h-1zM613 503.4h1V508.7h-1zM614 498.9h1V528.8h-1zM615 491.8h1V492.4h-1zM615 492.4h1V515.0h-1zM616 497.1h1V497.9h-1zM616 497.9h1V511.1h-1zM616 511.1h1V515.6h-1zM617 497.9h1V511.1h-1zM618 495.6h1V499.2h-1zM619 483.0h1V483.2h-1zM619 483.2h1V499.2h-1zM619 499.2h1V510.1h-1zM620 480.1h1V482.3h-1zM620 482.3h1V494.5h-1zM620 494.5h1V516.4h-1zM622 503.3h1V532.8h-1zM623 494.2h1V503.3h-1zM623 503.3h1V508.2h-1zM624 492.0h1V501.4h-1zM624 501.4h1V508.9h-1zM626 501.4h1V528.5h-1zM627 495.8h1V508.2h-1zM628 483.0h1V483.1h-1zM628 483.1h1V505.7h-1zM628 505.7h1V512.3h-1zM629 485.4h1V505.7h-1zM630 487.1h1V490.7h-1zM631 490.5h1V490.7h-1zM631 490.7h1V497.7h-1zM632 485.6h1V493.6h-1zM632 493.6h1V498.2h-1zM633 493.6h1V501.7h-1zM634 486.2h1V501.7h-1zM635 487.8h1V509.9h-1zM635 509.9h1V512.5h-1zM636 497.2h1V512.6h-1zM637 488.8h1V495.0h-1zM639 500.4h1V517.6h-1zM640 494.6h1V500.4h-1zM641 494.4h1V494.6h-1zM642 494.4h1V502.4h-1zM643 502.2h1V512.0h-1zM644 500.0h1V502.9h-1zM644 502.9h1V509.6h-1zM645 502.9h1V513.8h-1zM646 503.5h1V516.0h-1zM647 507.3h1V526.5h-1zM647 526.5h1V546.7h-1zM648 498.0h1V531.7h-1zM649 492.8h1V498.0h-1zM651 498.0h1V503.1h-1zM651 503.1h1V532.7h-1zM651 532.7h1V547.4h-1zM652 488.4h1V489.5h-1zM652 489.5h1V505.2h-1zM653 490.4h1V501.4h-1zM654 490.4h1V501.4h-1zM655 483.9h1V488.6h-1zM655 488.6h1V493.4h-1zM656 484.9h1V525.5h-1zM657 484.2h1V511.5h-1zM658 493.7h1V511.5h-1zM659 488.3h1V493.7h-1zM659 493.7h1V510.7h-1zM660 488.7h1V509.7h-1zM661 490.1h1V501.7h-1zM662 498.1h1V501.7h-1zM663 485.5h1V498.1h-1zM663 498.1h1V522.6h-1zM664 495.8h1V523.7h-1zM664 523.7h1V526.4h-1zM665 484.6h1V523.7h-1zM666 503.9h1V530.9h-1zM667 486.8h1V503.9h-1zM668 485.2h1V498.4h-1zM668 498.4h1V513.1h-1zM669 498.4h1V512.4h-1zM670 498.3h1V512.4h-1zM671 497.9h1V520.4h-1zM671 520.4h1V532.5h-1zM672 489.2h1V491.2h-1zM672 491.2h1V515.8h-1zM672 515.8h1V542.8h-1zM673 498.1h1V515.8h-1zM674 498.1h1V532.8h-1zM675 483.8h1V486.1h-1zM675 486.1h1V505.1h-1zM676 485.3h1V502.8h-1zM676 502.8h1V516.5h-1zM676 516.5h1V519.8h-1zM677 502.8h1V508.8h-1zM678 504.5h1V508.8h-1zM679 496.8h1V504.5h-1zM680 492.1h1V494.0h-1zM680 494.0h1V499.6h-1zM681 500.1h1V520.8h-1zM682 500.1h1V514.3h-1zM683 487.6h1V510.1h-1zM684 510.1h1V520.5h-1zM684 520.5h1V538.3h-1zM685 509.1h1V520.5h-1zM686 505.5h1V509.9h-1zM687 493.7h1V509.9h-1zM687 509.9h1V517.2h-1zM688 495.6h1V511.8h-1zM689 497.5h1V519.1h-1zM690 497.5h1V520.8h-1zM691 494.3h1V497.4h-1zM691 497.4h1V505.9h-1zM692 493.9h1V503.2h-1zM692 503.2h1V511.8h-1zM692 511.8h1V512.5h-1zM693 505.2h1V511.8h-1zM694 505.2h1V519.3h-1zM695 494.9h1V500.3h-1zM696 491.5h1V504.4h-1zM697 491.9h1V511.3h-1zM698 498.8h1V508.2h-1zM699 507.0h1V508.2h-1zM699 508.2h1V541.3h-1zM700 518.7h1V535.1h-1zM701 511.7h1V511.9h-1zM703 497.9h1V507.2h-1zM704 505.5h1V508.2h-1zM704 508.2h1V522.3h-1zM705 508.2h1V529.9h-1zM706 504.1h1V529.9h-1zM707 496.9h1V503.5h-1zM708 503.5h1V513.5h-1zM708 513.5h1V516.3h-1zM709 513.5h1V517.4h-1zM710 505.3h1V517.4h-1zM711 509.2h1V526.5h-1zM711 526.5h1V531.3h-1zM712 495.6h1V501.2h-1zM712 501.2h1V533.9h-1zM713 502.3h1V513.9h-1zM714 502.3h1V512.4h-1zM715 493.0h1V497.1h-1zM715 497.1h1V506.8h-1zM716 493.2h1V514.2h-1zM716 514.2h1V531.0h-1zM717 514.2h1V529.1h-1zM718 513.9h1V529.1h-1zM719 498.3h1V513.3h-1zM719 513.3h1V523.3h-1zM720 497.9h1V502.6h-1zM720 502.6h1V508.6h-1zM721 503.4h1V514.7h-1zM722 503.4h1V514.8h-1zM723 486.2h1V501.6h-1zM724 494.7h1V507.4h-1zM724 507.4h1V518.5h-1zM725 508.8h1V536.6h-1zM726 508.8h1V519.2h-1zM727 506.4h1V506.7h-1zM727 506.7h1V519.2h-1zM727 519.2h1V523.3h-1zM728 512.4h1V516.5h-1zM728 516.5h1V525.2h-1zM729 504.0h1V516.5h-1zM730 496.1h1V501.5h-1zM731 495.9h1V501.5h-1zM731 501.5h1V514.0h-1zM732 496.5h1V505.0h-1zM732 505.0h1V505.6h-1zM733 506.3h1V509.2h-1zM734 506.3h1V516.8h-1zM735 503.2h1V526.4h-1zM736 502.9h1V534.4h-1zM736 534.4h1V534.6h-1zM737 496.8h1V507.3h-1zM738 496.8h1V507.3h-1zM739 498.2h1V508.4h-1zM739 508.4h1V526.8h-1zM740 516.3h1V524.1h-1zM740 524.1h1V526.2h-1zM741 506.8h1V524.1h-1zM742 504.3h1V514.1h-1zM743 495.3h1V504.3h-1zM743 504.3h1V512.2h-1zM744 495.3h1V507.0h-1zM744 507.0h1V528.4h-1zM745 507.0h1V532.3h-1zM746 497.6h1V528.7h-1zM747 492.4h1V504.4h-1zM748 499.6h1V509.5h-1zM748 509.5h1V514.2h-1zM749 493.4h1V505.5h-1zM750 499.8h1V505.5h-1zM751 502.4h1V513.4h-1zM752 507.8h1V522.3h-1zM752 522.3h1V523.9h-1zM754 498.4h1V505.8h-1zM755 508.8h1V512.9h-1zM755 512.9h1V529.2h-1zM756 504.6h1V513.4h-1zM756 513.4h1V552.1h-1zM757 511.2h1V513.4h-1zM759 506.6h1V510.0h-1z" fill="#8ae83e" fill-opacity="1.0"/>
<polygon points="354.2,241 354.2,261.8 358.8,257.6 361.6,264.6 364.4,263.4 361.6,256.8 367.6,256.8" fill="#fff" stroke="#000" stroke-width="0.8"/>
<rect x="786" y="84" width="13" height="507" fill="#f0f0f0" />
<rect x="787" y="113.5" width="12" height="460.5" fill="#cdcdcd" />
<polyline points="789,109 792.5,105 796,109" fill="none" stroke="#a0a0a0" stroke-width="1.1"/>
<polyline points="789,581 792.5,585 796,581" fill="none" stroke="#a0a0a0" stroke-width="1.1"/>
<rect x="212" y="591.5" width="587" height="15.5" fill="#f0f0f0" />
<rect x="226" y="593" width="545" height="14" fill="#cdcdcd" />
<polyline points="221,596.5 217.5,600 221,603.5" fill="none" stroke="#a0a0a0" stroke-width="1.1"/>
<polyline points="777,596.5 780.5,600 777,603.5" fill="none" stroke="#a0a0a0" stroke-width="1.1"/>
<line x1="799.5" y1="20" x2="799.5" y2="607" stroke="#c8c8c8" stroke-width="1" />
<rect x="13.5" y="77.5" width="186" height="154.5" fill="#f0f0f0" stroke="#b4b4b4" stroke-width="1" />
<rect x="185.5" y="78" width="13.5" height="136" fill="#f0f0f0" />
<rect x="186" y="95" width="12.5" height="101" fill="#cdcdcd" />
<polyline points="188.5,89 192,85.5 195.5,89" fill="none" stroke="#a6a6a6" stroke-width="1.1"/>
<polyline points="188.5,204.5 191.5,208 194.5,204.5" fill="none" stroke="#a6a6a6" stroke-width="1.1"/>
<rect x="14" y="215.8" width="169.5" height="13.8" fill="#f0f0f0" />
<rect x="28.5" y="216" width="142" height="13.5" fill="#cdcdcd" />
<polyline points="23,219.5 19.5,222.7 23,226" fill="none" stroke="#a6a6a6" stroke-width="1.1"/>
<polyline points="176,219.3 179.2,222.7 176,226.1" fill="none" stroke="#a6a6a6" stroke-width="1.1"/>
<rect x="183.5" y="213.5" width="15.5" height="18" fill="#ffffff" />
<rect x="17.5" y="85.5" width="7" height="8.5" fill="#f4f4f4" stroke="#9a9a9a" stroke-width="1" rx="1"/>
<line x1="19.3" y1="89.7" x2="22.7" y2="89.7" stroke="#5060b0" stroke-width="1.2" />
<text x="30.7" y="93.7" font-size="10.4" fill="#8a8a8a" textLength="38.7" lengthAdjust="spacingAndGlyphs" stroke="#8a8a8a" stroke-width="0.3" >ad7768-1</text>
<rect x="44.5" y="106.5" width="10" height="10.5" fill="#f8f8f8" stroke="#c4c4c4" stroke-width="1" />
<polyline points="46.3,111.5 48.8,114.2 53,108.2" fill="none" stroke="#9a9a9a" stroke-width="1.1"/>
<text x="59.2" y="115.3" font-size="11.8" fill="#000" textLength="36" lengthAdjust="spacingAndGlyphs" stroke="#000" stroke-width="0.3" >voltage0</text>
<polygon points="24,119.5 176,119.5 176,210.5 87,210.5 90,248.7 49.5,210.5 24,210.5" fill="#ffc000" stroke="#4470b0" stroke-width="1"/>
<text x="31.5" y="137.4" font-size="12.6" fill="#ff0000" font-weight="700" textLength="123.5" lengthAdjust="spacingAndGlyphs" >Change the plot type</text>
<text x="31.5" y="154.5" font-size="12.6" fill="#ff0000" font-weight="700" textLength="83.5" lengthAdjust="spacingAndGlyphs" >to &quot;Frequency</text>
<text x="31.5" y="171.6" font-size="12.6" fill="#ff0000" font-weight="700" textLength="124" lengthAdjust="spacingAndGlyphs" >Domain&quot; and change</text>
<text x="31.5" y="189.2" font-size="12.6" fill="#ff0000" font-weight="700" textLength="110.7" lengthAdjust="spacingAndGlyphs" >FFT Size to &quot;4096&quot;.</text>
<text x="5" y="248.6" font-size="11.6" fill="#000" font-weight="700" textLength="42.3" lengthAdjust="spacingAndGlyphs" >Plot Type</text>
<rect x="13.0" y="254.5" width="151.5" height="18.5" fill="#efefef" stroke="#c2c2c2" stroke-width="1" />
<rect x="151" y="255.5" width="13.5" height="16.5" fill="#cccccc" />
<polyline points="154.5,262.25 158,265.55 161.5,262.25" fill="none" stroke="#a8a8a8" stroke-width="1"/>
<text x="14.9" y="268.05" font-size="11.8" fill="#8a8a8a" textLength="80.8" lengthAdjust="spacingAndGlyphs" stroke="#8a8a8a" stroke-width="0.3" >Frequency Domain</text>
<text x="12.5" y="292" font-size="11.8" fill="#000" textLength="35" lengthAdjust="spacingAndGlyphs" stroke="#000" stroke-width="0.3" >FFT Size:</text>
<rect x="65.8" y="278.8" width="98.7" height="18.19999999999999" fill="#efefef" stroke="#c2c2c2" stroke-width="1" />
<rect x="151" y="279.8" width="13.5" height="16.19999999999999" fill="#cccccc" />
<polyline points="154.5,286.4 158,289.7 161.5,286.4" fill="none" stroke="#a8a8a8" stroke-width="1"/>
<text x="67.7" y="292.2" font-size="11.8" fill="#8a8a8a" textLength="20" lengthAdjust="spacingAndGlyphs" stroke="#8a8a8a" stroke-width="0.3" >4096</text>
<text x="12.4" y="314.3" font-size="11.8" fill="#000" textLength="37.9" lengthAdjust="spacingAndGlyphs" stroke="#000" stroke-width="0.3" >Window:</text>
<rect x="65.8" y="302.7" width="98.7" height="16.30000000000001" fill="#efefef" stroke="#c2c2c2" stroke-width="1" />
<rect x="151" y="303.7" width="13.5" height="14.300000000000011" fill="#cccccc" />
<polyline points="154.5,309.35 158,312.65000000000003 161.5,309.35" fill="none" stroke="#a8a8a8" stroke-width="1"/>
<text x="67.7" y="315.15000000000003" font-size="11.8" fill="#8a8a8a" textLength="34.5" lengthAdjust="spacingAndGlyphs" stroke="#8a8a8a" stroke-width="0.3" >Hanning</text>
<text x="12.4" y="337.3" font-size="11.8" fill="#000" textLength="36.9" lengthAdjust="spacingAndGlyphs" stroke="#000" stroke-width="0.3" >Average:</text>
<rect x="65" y="322.3" width="91" height="21.69999999999999" fill="#ffffff" />
<line x1="65" y1="322.8" x2="155.5" y2="322.8" stroke="#c4c4c4" stroke-width="1" />
<line x1="65" y1="343.5" x2="155.5" y2="343.5" stroke="#c4c4c4" stroke-width="1" />
<line x1="65.5" y1="322.3" x2="65.5" y2="344" stroke="#c4c4c4" stroke-width="1" />
<rect x="156.5" y="323.8" width="7.5" height="9.149999999999967" fill="#f4f4f4" stroke="#d2d2d2" stroke-width="1" />
<rect x="156.5" y="333.34999999999997" width="7.5" height="9.150000000000023" fill="#f4f4f4" stroke="#d2d2d2" stroke-width="1" />
<polygon points="157.8,329.775 160.2,326.975 162.6,329.775" fill="#111"/>
<polygon points="157.8,336.525 160.2,339.32499999999993 162.6,336.525" fill="#111"/>
<text x="68.5" y="337.3" font-size="11.8" fill="#000" textLength="4" lengthAdjust="spacingAndGlyphs" stroke="#000" stroke-width="0.3" >1</text>
<text x="12.4" y="361.2" font-size="11.8" fill="#000" textLength="50.8" lengthAdjust="spacingAndGlyphs" stroke="#000" stroke-width="0.3" >PWR Offset:</text>
<rect x="65" y="346.8" width="91" height="21.5" fill="#ffffff" />
<line x1="65" y1="347.3" x2="155.5" y2="347.3" stroke="#c4c4c4" stroke-width="1" />
<line x1="65" y1="367.8" x2="155.5" y2="367.8" stroke="#c4c4c4" stroke-width="1" />
<line x1="65.5" y1="346.8" x2="65.5" y2="368.3" stroke="#c4c4c4" stroke-width="1" />
<rect x="156.5" y="348.3" width="7.5" height="9.05" fill="#f4f4f4" stroke="#d2d2d2" stroke-width="1" />
<rect x="156.5" y="357.75" width="7.5" height="9.05" fill="#f4f4f4" stroke="#d2d2d2" stroke-width="1" />
<polygon points="157.8,354.22499999999997 160.2,351.425 162.6,354.22499999999997" fill="#111"/>
<polygon points="157.8,360.875 160.2,363.67499999999995 162.6,360.875" fill="#111"/>
<text x="68.5" y="361.6" font-size="11.8" fill="#000" textLength="17.2" lengthAdjust="spacingAndGlyphs" stroke="#000" stroke-width="0.3" >0.00</text>
<rect x="9.5" y="252" width="160" height="48.5" fill="none" stroke="#ff0000" stroke-width="3" />
<text x="5" y="386.5" font-size="11.6" fill="#000" font-weight="700" textLength="18.5" lengthAdjust="spacingAndGlyphs" >Info</text>
<rect x="13" y="414" width="185" height="115" fill="#f0f0f0" />
<rect x="107.5" y="392" width="90" height="21" fill="#f0f0f0" stroke="#d4d4d4" stroke-width="1" />
<rect x="12.5" y="390.5" width="95" height="25" fill="#ffffff" stroke="#d4d4d4" stroke-width="1" />
<rect x="14.5" y="415.8" width="182" height="112.5" fill="#ffffff" stroke="#c2c2c2" stroke-width="1" />
<line x1="14.5" y1="416" x2="196.5" y2="416" stroke="#b8b8b8" stroke-width="1.2" />
<text x="44.5" y="407" font-size="11.8" fill="#000" textLength="33.5" lengthAdjust="spacingAndGlyphs" stroke="#000" stroke-width="0.3" >Markers</text>
<text x="137" y="408.3" font-size="11.8" fill="#000" textLength="32.3" lengthAdjust="spacingAndGlyphs" stroke="#000" stroke-width="0.3" >Devices</text>
<text x="15.5" y="429" font-size="11.8" fill="#000" textLength="77.5" lengthAdjust="spacingAndGlyphs" stroke="#000" stroke-width="0.3" >No markers active</text>
<rect x="182" y="418" width="12" height="89" fill="#f0f0f0" />
<rect x="182.5" y="434" width="11" height="59" fill="#cdcdcd" />
<polyline points="185,426.5 188,423.5 191,426.5" fill="none" stroke="#a6a6a6" stroke-width="1"/>
<polyline points="185,499 188,502 191,499" fill="none" stroke="#a6a6a6" stroke-width="1"/>
<rect x="15" y="511" width="166" height="14.7" fill="#f0f0f0" />
<rect x="29" y="511.5" width="137" height="14" fill="#cdcdcd" />
<polyline points="23.5,515 20.5,518.2 23.5,521.5" fill="none" stroke="#a6a6a6" stroke-width="1"/>
<polyline points="172,515 175,518.2 172,521.5" fill="none" stroke="#a6a6a6" stroke-width="1"/>
<rect x="21" y="544" width="44.6" height="52.6" fill="#000000" />
<polygon points="29.9,553 29.9,589.2 57.5,571" fill="#ffffff"/>
<text x="73.4" y="565.8" font-size="31" font-weight="700" fill="#000" stroke="#000" stroke-width="0.7" textLength="106.3" lengthAdjust="spacingAndGlyphs">ANALOG</text>
<text x="73.4" y="595.2" font-size="31.5" font-weight="700" fill="#000" stroke="#000" stroke-width="0.7" textLength="106.9" lengthAdjust="spacingAndGlyphs">DEVICES</text>
<polygon points="208.5,58 216,65.5 208.5,73" fill="#f4f4f4" stroke="#a8a8a8" stroke-width="1"/>
<rect x="217" y="58" width="3.5" height="15" fill="#e8e8e8" stroke="#a8a8a8" stroke-width="0.9" />
<rect x="227.5" y="50.5" width="27.5" height="31" fill="#cce4f7" stroke="#99c9ef" stroke-width="1" />
<polygon points="237.8,56.6 244.8,56.6 249.6,62.2 249.6,70.2 244.8,75.8 237.8,75.8 233,70.2 233,62.2" fill="#e8644a" stroke="#c23a22" stroke-width="0.9"/>
<line x1="238.2" y1="62.3" x2="244.6" y2="70.4" stroke="#e02828" stroke-width="3.2" />
<line x1="244.6" y1="62.3" x2="238.2" y2="70.4" stroke="#e02828" stroke-width="3.2" />
<line x1="238.4" y1="62.5" x2="244.4" y2="70.2" stroke="#fff" stroke-width="1.9" />
<line x1="244.4" y1="62.5" x2="238.4" y2="70.2" stroke="#fff" stroke-width="1.9" />
<line x1="271.3" y1="69.1" x2="276.3" y2="74.8" stroke="#2e2e2e" stroke-width="2.4" stroke-linecap="round"/>
<ellipse cx="267" cy="63.5" rx="6.4" ry="7.3" fill="#ebebe6" stroke="#4a4a4a" stroke-width="1.5"/>
<line x1="263.8" y1="63.5" x2="270.2" y2="63.5" stroke="#2a2a2a" stroke-width="1.6" />
<line x1="267" y1="59.9" x2="267" y2="67.1" stroke="#2a2a2a" stroke-width="1.6" />
<line x1="298.8" y1="69.1" x2="303.8" y2="74.8" stroke="#2e2e2e" stroke-width="2.4" stroke-linecap="round"/>
<ellipse cx="294.5" cy="63.5" rx="6.4" ry="7.3" fill="#ebebe6" stroke="#4a4a4a" stroke-width="1.5"/>
<line x1="291.1" y1="63.5" x2="297.9" y2="63.5" stroke="#2a2a2a" stroke-width="1.7" />
<line x1="326.3" y1="69.6" x2="331.3" y2="75.3" stroke="#2e2e2e" stroke-width="2.4" stroke-linecap="round"/>
<ellipse cx="322" cy="64" rx="6.4" ry="7.3" fill="#ebebe6" stroke="#4a4a4a" stroke-width="1.5"/>
<polyline points="318.6,62.4 318.6,60.2 320.6,60.2" fill="none" stroke="#555" stroke-width="1"/>
<polyline points="318.6,65.6 318.6,67.8 320.6,67.8" fill="none" stroke="#555" stroke-width="1"/>
<polyline points="325.4,62.4 325.4,60.2 323.4,60.2" fill="none" stroke="#555" stroke-width="1"/>
<polyline points="325.4,65.6 325.4,67.8 323.4,67.8" fill="none" stroke="#555" stroke-width="1"/>
<rect x="343.2" y="55.6" width="17.9" height="20.3" fill="#3a72b8" stroke="#2a5a9a" stroke-width="0.8" rx="1.5"/>
<rect x="345.2" y="56.2" width="13.8" height="9.6" fill="#ffffff" />
<rect x="345.2" y="56" width="13.8" height="2.8" fill="#d81e1e" />
<line x1="346.5" y1="60.8" x2="354" y2="60.8" stroke="#c8c8c8" stroke-width="1" />
<line x1="346.5" y1="63.2" x2="352.5" y2="63.2" stroke="#c8c8c8" stroke-width="1" />
<rect x="347.1" y="67.8" width="9.4" height="7" fill="#e6e6e6" />
<rect x="349" y="69.3" width="2.2" height="4.2" fill="#2f5fa0" />
<polygon points="351.8,66.6 359.6,56.4 361.4,57.8 353.6,68 351.2,68.6" fill="#f0a838" stroke="#7a5018" stroke-width="0.6"/>
<polygon points="359.6,56.4 360.6,55.1 362.4,56.5 361.4,57.8" fill="#d02020"/>
<rect x="373.6" y="59" width="12.6" height="14.2" fill="#ececec" stroke="#9a9a9a" stroke-width="1.4" rx="0.8"/>
<rect x="374.2" y="59.4" width="11.4" height="3.4" fill="#3a6ab0" />
<line x1="374.5" y1="61.2" x2="385.2" y2="61.2" stroke="#8ab0e0" stroke-width="0.6" />
<polygon points="379.8,54.8 382.4,57.6 377.2,57.6" fill="#5a5a5a"/>
<polygon points="379.8,78 382.4,75 377.2,75" fill="#5a5a5a"/>
<polygon points="369.8,66.2 372.4,63.6 372.4,68.8" fill="#5a5a5a"/>
<polygon points="390,66.2 387.4,63.6 387.4,68.8" fill="#5a5a5a"/>
<rect x="395.5" y="60.3" width="11" height="11.5" fill="#ffffff" stroke="#333333" stroke-width="1" />
<polyline points="397.5,65.8 400,68.8 404.5,62.8" fill="none" stroke="#222" stroke-width="1.2"/>
<text x="411" y="70.2" font-size="12" fill="#000" textLength="44.2" lengthAdjust="spacingAndGlyphs" stroke="#000" stroke-width="0.3" >Auto scale</text>
<rect x="458.5" y="60.3" width="11" height="11.5" fill="#ffffff" stroke="#333333" stroke-width="1" />
<polyline points="460.5,65.8 463,68.8 467.5,62.8" fill="none" stroke="#222" stroke-width="1.2"/>
<text x="474" y="70.2" font-size="12" fill="#000" textLength="43.1" lengthAdjust="spacingAndGlyphs" stroke="#000" stroke-width="0.3" >Show grid</text>
<text x="530.7" y="70.3" font-size="12" fill="#000" textLength="29.3" lengthAdjust="spacingAndGlyphs" stroke="#000" stroke-width="0.3" >Y Max:</text>
<rect x="560.5" y="55.5" width="55" height="20.8" fill="#efefef" stroke="#c6c6c6" stroke-width="1" />
<text x="564" y="70.3" font-size="12" fill="#8a8a8a" textLength="18.7" lengthAdjust="spacingAndGlyphs" stroke="#8a8a8a" stroke-width="0.3" >1000</text>
<rect x="616.2" y="56" width="7.6" height="9.8" fill="#f2f2f2" stroke="#dadada" stroke-width="1" />
<rect x="616.2" y="66.2" width="7.6" height="9.8" fill="#f2f2f2" stroke="#dadada" stroke-width="1" />
<polygon points="618,62.2 620,59.6 622,62.2" fill="#505050"/>
<polygon points="618,69.6 620,72.2 622,69.6" fill="#505050"/>
<text x="624.7" y="70.3" font-size="12" fill="#000" textLength="27.6" lengthAdjust="spacingAndGlyphs" stroke="#000" stroke-width="0.3" >Y Min:</text>
<rect x="653" y="55.5" width="55" height="21" fill="#efefef" stroke="#c6c6c6" stroke-width="1" />
<text x="656.6" y="70.3" font-size="12" fill="#8a8a8a" textLength="23.3" lengthAdjust="spacingAndGlyphs" stroke="#8a8a8a" stroke-width="0.3" >-1000</text>
<rect x="709.8" y="56" width="7.2" height="9.8" fill="#f2f2f2" stroke="#dadada" stroke-width="1" />
<rect x="709.8" y="66.2" width="7.2" height="9.8" fill="#f2f2f2" stroke="#dadada" stroke-width="1" />
<polygon points="711.4,62.2 713.4,59.6 715.4,62.2" fill="#505050"/>
<polygon points="711.4,69.6 713.4,72.2 715.4,69.6" fill="#505050"/>
<line x1="718" y1="50" x2="718" y2="82" stroke="#d8d8d8" stroke-width="1" />
<rect x="724.5" y="56.5" width="17" height="19" fill="#f8f8f8" stroke="#4a4a4a" stroke-width="1.2" rx="2"/>
<rect x="725" y="57" width="16" height="3.5" fill="#5a5a5a" />
<circle cx="734" cy="58.8" r="0.7" fill="#f0b000"/><circle cx="736.5" cy="58.8" r="0.7" fill="#f0b000"/><circle cx="739" cy="58.8" r="0.7" fill="#f0b000"/>
<path d="M736.5,68 h3 v3 h3 v3 h-3 v3 h-3 v-3 h-3 v-3 h3 z" fill="#7ac142" stroke="#4a8a2a" stroke-width="0.6"/>
<text x="774.8" y="70.3" font-size="11.5" fill="#000" textLength="16.5" lengthAdjust="spacingAndGlyphs" stroke="#000" stroke-width="0.3" >kHz</text>
</svg>
</body></html>
